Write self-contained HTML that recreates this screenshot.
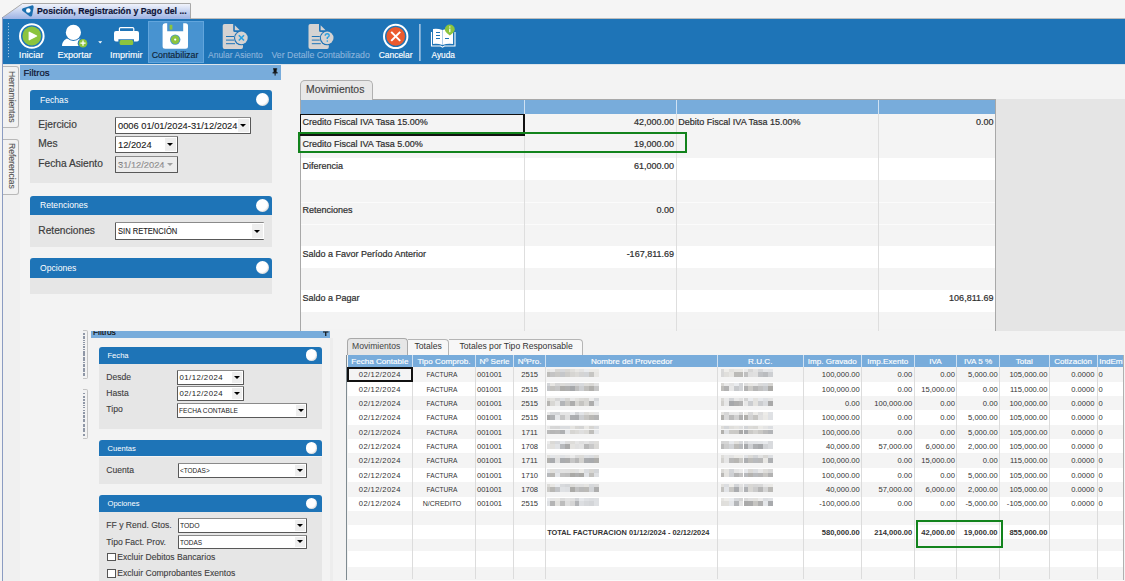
<!DOCTYPE html>
<html><head><meta charset="utf-8">
<style>
*{box-sizing:border-box;margin:0;padding:0}
html,body{width:1125px;height:581px;overflow:hidden;background:#f3f3f3;font-family:"Liberation Sans",sans-serif;color:#333}
.a{position:absolute}
.t{position:absolute;white-space:nowrap;line-height:1}
.tb{color:#fff;font-size:9.2px;-webkit-text-stroke:0.15px #fff}
.tbd{color:#8db4dc;font-size:9.2px;-webkit-text-stroke:0.1px #8db4dc}
.gh{position:absolute;background:#1e74b7;border-radius:3px 3px 0 0}
.gh span{position:absolute;left:10px;color:#fff;font-size:8.6px;line-height:1}
.gh i{position:absolute;width:13px;height:13px;border-radius:50%;background:#fff;box-shadow:inset -1px -1px 1px rgba(0,0,0,0.12)}
.gb{position:absolute;background:#e6e6e6}
.lbl{position:absolute;font-size:10.2px;color:#3d3d3d;white-space:nowrap;line-height:1;-webkit-text-stroke:0.2px #3d3d3d}
.cb{position:absolute;background:#fff;border:1px solid #585858;border-top-color:#8a8a8a;border-radius:1px}
.cb span{position:absolute;left:2px;font-size:9.3px;color:#222;white-space:nowrap;line-height:1;-webkit-text-stroke:0.12px #222}
.cb b{position:absolute;right:1px;top:1px;bottom:1px;width:11px;background:#eeeeee}
.cb b:after{content:"";position:absolute;left:50%;top:50%;margin-left:-3px;margin-top:-1.5px;border-left:3px solid transparent;border-right:3px solid transparent;border-top:3.2px solid #000}
.g{font-size:9px;color:#2e2e2e;-webkit-text-stroke:0.2px #2e2e2e}
.cb b.dis:after{border-top-color:#a0a0a0}
</style></head><body>

<!-- top tab strip -->
<div class="a" style="left:0;top:0;width:1125px;height:19px;background:#f5f5f5"></div>
<div class="a" style="left:191px;top:18px;width:934px;height:1px;background:#bdbdbd"></div>
<svg class="a" style="left:0;top:0" width="200" height="20">
<defs><linearGradient id="tg" x1="0" y1="0" x2="0" y2="1"><stop offset="0" stop-color="#f3f5fc"/><stop offset="1" stop-color="#97aee2"/></linearGradient></defs>
<path d="M2.5,20 L2.5,17.5 L22.5,3.5 L190.5,3.5 L190.5,20 Z" fill="url(#tg)" stroke="#a9a9a9" stroke-width="1"/>
<path d="M23.6,9.8 L32.1,6.9 L30.6,15 Z" fill="#1a6fb0" stroke="#1a6fb0" stroke-width="3.2" stroke-linejoin="round"/>
<circle cx="28.3" cy="10.5" r="2.3" fill="#fff"/>
</svg>
<div class="t" style="left:37px;top:5.6px;font-size:9.8px;font-weight:bold;color:#0c1236;-webkit-text-stroke:0.2px #0c1236;transform-origin:0 0;transform:scaleX(0.89)">Posición, Registración y Pago del ...</div>

<!-- toolbar -->
<div class="a" style="left:2px;top:19px;width:1123px;height:45px;background:#1e74b7"></div>
<div class="a" style="left:2px;top:17px;width:1px;height:564px;background:#8b9cc2"></div>

<!-- toolbar icons -->
<div class="a" style="left:148px;top:21px;width:56px;height:42px;background:#4893d0;border:1px solid #62a5dc"></div>
<svg class="a" style="left:0;top:19px" width="470" height="45" viewBox="0 19 470 45">
 <g fill="#9dc0e2"><rect x="8" y="23" width="1" height="1.2"/><rect x="8" y="26" width="1" height="1.2"/><rect x="8" y="29" width="1" height="1.2"/><rect x="8" y="32" width="1" height="1.2"/><rect x="8" y="35" width="1" height="1.2"/><rect x="8" y="38" width="1" height="1.2"/><rect x="8" y="41" width="1" height="1.2"/><rect x="8" y="44" width="1" height="1.2"/><rect x="8" y="47" width="1" height="1.2"/><rect x="8" y="50" width="1" height="1.2"/><rect x="8" y="53" width="1" height="1.2"/><rect x="8" y="56" width="1" height="1.2"/></g>
 <!-- play -->
 <circle cx="31.8" cy="36" r="11.8" fill="none" stroke="#fff" stroke-width="2"/>
 <circle cx="31.8" cy="36" r="9.4" fill="#8cc43e"/>
 <path d="M29.2,32.2 L36.6,36 L29.2,39.8 Z" fill="#fff" stroke="#fff" stroke-width="1.2" stroke-linejoin="round"/>
 <!-- person -->
 <path d="M62,46 C62,41 66,38.2 68.5,38.2 Q73.4,41.2 78.3,38.2 C81,38.2 84.5,41 84.5,46 Z" fill="#fff"/>
 <circle cx="73.4" cy="32.4" r="8.5" fill="#1e74b7"/>
 <circle cx="73.4" cy="32.4" r="7.6" fill="#fff"/>
 <circle cx="83" cy="43.2" r="5.3" fill="#1e74b7"/>
 <circle cx="83" cy="43.2" r="4.3" fill="#8cc43e"/>
 <path d="M83,40.6 V45.8 M80.4,43.2 H85.6" stroke="#fff" stroke-width="1.3"/>
 <path d="M98.2,41.2 L102.2,41.2 L100.2,43.6 Z" fill="#fff"/>
 <!-- printer -->
 <rect x="119.4" y="27.6" width="14.4" height="4" rx="1.2" fill="none" stroke="#fff" stroke-width="1.2"/>
 <path d="M116,31 H137 Q139,31 139,33 V39.6 Q139,41.6 137,41.6 H134 V39.2 H118.4 V41.6 H116 Q114,41.6 114,39.6 V33 Q114,31 116,31 Z" fill="#fff"/>
 <rect x="119.6" y="40" width="13.6" height="5" rx="1.5" fill="#8cc43e"/>
 <!-- floppy -->
 <path d="M165,23.2 H167.2 V31.2 H183.2 V23.2 H185.5 Q188,23.2 188,25.7 V46.3 Q188,48.8 185.5,48.8 H165.1 Q162.6,48.8 162.6,46.3 V25.7 Q162.6,23.2 165,23.2 Z" fill="#fff"/>
 <rect x="169.6" y="24.8" width="2.8" height="4.8" fill="#8cc43e"/>
 <circle cx="175.2" cy="39.6" r="5.2" fill="#4893d0"/>
 <circle cx="175.2" cy="39.6" r="4.3" fill="#8cc43e"/>
 <circle cx="175.2" cy="39.6" r="1.1" fill="#fff"/>
 <!-- anular doc -->
 <g>
 <path d="M224.5,23.9 H233.2 V30.5 Q233.2,32 234.8,32 H243 V47 Q243,48.9 241.2,48.9 H224.5 Q222.7,48.9 222.7,47 V25.7 Q222.7,23.9 224.5,23.9 Z" fill="#d5d3d2"/>
 <path d="M234.8,25.2 L239.8,30.2 H234.8 Z" fill="#d5d3d2"/>
 <path d="M226,36.5 H234 M226,40.1 H234 M226,43.7 H235" stroke="#1e74b7" stroke-width="1"/>
 <circle cx="241.4" cy="37.9" r="7.4" fill="#1e74b7"/>
 <circle cx="241.4" cy="37.9" r="6.3" fill="#d5d3d2"/>
 <path d="M238.8,35.3 L244,40.5 M244,35.3 L238.8,40.5" stroke="#2aa0e0" stroke-width="1.6"/>
 </g>
 <!-- ver detalle doc -->
 <g transform="translate(85.8,0)">
 <path d="M224.5,23.9 H233.2 V30.5 Q233.2,32 234.8,32 H243 V47 Q243,48.9 241.2,48.9 H224.5 Q222.7,48.9 222.7,47 V25.7 Q222.7,23.9 224.5,23.9 Z" fill="#d5d3d2"/>
 <path d="M234.8,25.2 L239.8,30.2 H234.8 Z" fill="#d5d3d2"/>
 <path d="M226,36.5 H234 M226,40.1 H234 M226,43.7 H235" stroke="#1e74b7" stroke-width="1"/>
 <circle cx="241.4" cy="37.9" r="7.4" fill="#1e74b7"/>
 <circle cx="241.4" cy="37.9" r="6.3" fill="#d5d3d2"/>
 <path d="M239.4,35.8 Q239.4,33.8 241.4,33.8 Q243.4,33.8 243.4,35.6 Q243.4,36.8 241.5,37.6 V39" fill="none" stroke="#2aa0e0" stroke-width="1.4"/>
 <circle cx="241.5" cy="41.1" r="0.8" fill="#2aa0e0"/>
 </g>
 <!-- cancel -->
 <circle cx="395.7" cy="36.4" r="11.7" fill="none" stroke="#fff" stroke-width="2"/>
 <circle cx="395.7" cy="36.4" r="9.3" fill="#ec5a2e"/>
 <path d="M391.2,31.9 L400.2,40.9 M400.2,31.9 L391.2,40.9" stroke="#fff" stroke-width="2"/>
 <rect x="419.3" y="24" width="1.2" height="37" fill="#cfe0f1"/>
 <!-- book -->
 <path d="M433,29 Q437,28 442.5,30 Q448,28 453,29 V44 Q448,43 442.5,45 Q437,43 433,44 Z" fill="#fff"/>
 <path d="M431.5,32 V46 H440.5 L442.5,47.2 L444.5,46 H455 V32" fill="none" stroke="#fff" stroke-width="1.1"/>
 <path d="M436,32.5 H440 M436,35.5 H440 M436,38.5 H440 M445,38.5 H449" stroke="#1e74b7" stroke-width="1"/>
 <path d="M442.5,30 V45" stroke="#9cc2e4" stroke-width="0.8"/>
 <path d="M444.8,29.6 A5,5 0 1 1 454.8,29.6 Q454.8,32.2 449.8,35.4 Q444.8,32.2 444.8,29.6 Z" fill="#8cc43e"/>
 <rect x="449.2" y="28.6" width="1.2" height="3.6" fill="#fff"/>
 <rect x="449.2" y="26.4" width="1.2" height="1.2" fill="#fff"/>
</svg>
<div class="t tb" style="left:18.8px;top:51px;font-size:9.3px">Iniciar</div>
<div class="t tb" style="left:57.4px;top:51px;font-size:9.1px">Exportar</div>
<div class="t tb" style="left:110px;top:51px;font-size:9px">Imprimir</div>
<div class="t tb" style="left:151.7px;top:51px;font-size:8.85px;color:#0f2438;-webkit-text-stroke:0.15px #0f2438">Contabilizar</div>
<div class="t tbd" style="left:208px;top:51px;font-size:8.5px">Anular Asiento</div>
<div class="t tbd" style="left:271.5px;top:51px;font-size:8.75px">Ver Detalle Contabilizado</div>
<div class="t tb" style="left:378.7px;top:51px;font-size:8.45px">Cancelar</div>
<div class="t tb" style="left:431.5px;top:51px;font-size:8.3px">Ayuda</div>

<!-- left strip & filtros panel -->
<div class="a" style="left:3px;top:64px;width:1122px;height:1px;background:#dde4ea"></div>
<div class="a" style="left:3px;top:65px;width:17px;height:516px;background:#f0f0f0"></div>
<div class="a" style="left:3px;top:66px;width:16px;height:62px;background:#f2f2f2;border:1px solid #b8b8b8;border-left:none;border-radius:0 3px 3px 0"></div>
<div class="t" style="left:4px;top:70.8px;font-size:8.6px;color:#565656;-webkit-text-stroke:0.1px #565656;transform-origin:0 0;transform:translate(12px,0) rotate(90deg)">Herramientas</div>
<div class="a" style="left:3px;top:139px;width:16px;height:56px;background:#f2f2f2;border:1px solid #b8b8b8;border-left:none;border-radius:0 3px 3px 0"></div>
<div class="t" style="left:4px;top:143px;font-size:8.6px;color:#565656;-webkit-text-stroke:0.1px #565656;transform-origin:0 0;transform:translate(12px,0) rotate(90deg)">Referencias</div>

<div class="a" style="left:20px;top:65px;width:261px;height:15px;background:#78acdb"></div>
<div class="t" style="left:23.5px;top:68px;font-size:9.6px;color:#0d1530;-webkit-text-stroke:0.2px #0d1530">Filtros</div>
<svg class="a" style="left:270px;top:66px" width="10" height="11"><rect x="3.6" y="2.6" width="3" height="4" fill="#111"/><rect x="3" y="2.4" width="4.2" height="1" fill="#111"/><rect x="2.6" y="6.2" width="5" height="1.2" fill="#111"/><rect x="4.6" y="7" width="1" height="2.6" fill="#111"/></svg>

<!-- Fechas group -->
<div class="gh" style="left:30px;top:90px;width:242px;height:19.5px"><span style="top:5.6px">Fechas</span><i style="left:225.5px;top:3px"></i></div>
<div class="gb" style="left:30px;top:109.5px;width:242px;height:73.5px"></div>
<div class="lbl" style="left:38.3px;top:120.3px">Ejercicio</div>
<div class="lbl" style="left:38.3px;top:139.3px">Mes</div>
<div class="lbl" style="left:38.3px;top:158.9px">Fecha Asiento</div>
<div class="cb" style="left:115px;top:117px;width:135.5px;height:16.5px"><span style="top:4px">0006 01/01/2024-31/12/2024</span><b></b></div>
<div class="cb" style="left:115px;top:135.7px;width:62.5px;height:17px"><span style="top:4.2px">12/2024</span><b></b></div>
<div class="cb" style="left:115px;top:155.5px;width:62.5px;height:17px;background:#ececec"><span style="top:4.2px;color:#a8a8a8">31/12/2024</span><b class="dis" style="background:#ececec"></b></div>

<!-- Retenciones group -->
<div class="gh" style="left:30px;top:195.5px;width:242px;height:19.5px"><span style="top:5.6px">Retenciones</span><i style="left:225.5px;top:3px"></i></div>
<div class="gb" style="left:30px;top:215px;width:242px;height:31.6px"></div>
<div class="lbl" style="left:38.3px;top:225.7px">Retenciones</div>
<div class="cb" style="left:114.6px;top:222px;width:149.4px;height:18px;border-right:none"><span style="top:3.8px;font-size:9px;transform-origin:0 0;transform:scaleX(0.84)">SIN RETENCIÓN</span><b></b></div>

<!-- Opciones group -->
<div class="gh" style="left:30px;top:258.2px;width:242px;height:20px"><span style="top:6px">Opciones</span><i style="left:225.5px;top:3.3px"></i></div>
<div class="gb" style="left:30px;top:278.2px;width:242px;height:15.4px"></div>

<!-- main content -->
<div class="a" style="left:300px;top:79.5px;width:73px;height:20.5px;background:#e8e8e8;border:1px solid #b0b0b0;border-bottom:none;border-radius:5px 5px 0 0"></div>
<div class="t" style="left:306px;top:85px;font-size:10.4px;color:#444;-webkit-text-stroke:0.15px #444">Movimientos</div>
<div class="a" style="left:373px;top:98.5px;width:752px;height:1px;background:#a8a8a8"></div>
<div class="a" style="left:300px;top:99px;width:1px;height:232px;background:#a8a8a8"></div>
<div class="a" style="left:301px;top:99.5px;width:694px;height:14.5px;background:#78acdb"></div>
<div class="a" style="left:995px;top:99px;width:130px;height:232px;background:#e5e5e5;border-left:1px solid #a8a8a8"></div>
<div class="a" style="left:301px;top:114px;width:694px;height:22px;background:#f4f4f4"></div>
<div class="t g" style="left:302.5px;top:118.20px">Credito Fiscal IVA Tasa 15.00%</div>
<div class="t g" style="right:451px;top:118.20px">42,000.00</div>
<div class="t g" style="left:678.3px;top:118.20px">Debito Fiscal IVA Tasa 15.00%</div>
<div class="t g" style="right:131.5px;top:118.20px">0.00</div>
<div class="a" style="left:301px;top:136px;width:694px;height:22px;background:#f4f4f4"></div>
<div class="t g" style="left:302.5px;top:140.20px">Credito Fiscal IVA Tasa 5.00%</div>
<div class="t g" style="right:451px;top:140.20px">19,000.00</div>
<div class="a" style="left:301px;top:158px;width:694px;height:22px;background:#ffffff"></div>
<div class="t g" style="left:302.5px;top:162.20px">Diferencia</div>
<div class="t g" style="right:451px;top:162.20px">61,000.00</div>
<div class="a" style="left:301px;top:180px;width:694px;height:22px;background:#f4f4f4"></div>
<div class="a" style="left:301px;top:202px;width:694px;height:22px;background:#f4f4f4;border-top:1px solid #fbfbfb"></div>
<div class="t g" style="left:302.5px;top:206.20px">Retenciones</div>
<div class="t g" style="right:451px;top:206.20px">0.00</div>
<div class="a" style="left:301px;top:224px;width:694px;height:22px;background:#f4f4f4;border-top:1px solid #fbfbfb"></div>
<div class="a" style="left:301px;top:246px;width:694px;height:22px;background:#ffffff"></div>
<div class="t g" style="left:302.5px;top:250.20px">Saldo a Favor Período Anterior</div>
<div class="t g" style="right:451px;top:250.20px">-167,811.69</div>
<div class="a" style="left:301px;top:268px;width:694px;height:22px;background:#f4f4f4"></div>
<div class="a" style="left:301px;top:290px;width:694px;height:22px;background:#ffffff"></div>
<div class="t g" style="left:302.5px;top:294.20px">Saldo a Pagar</div>
<div class="t g" style="right:131.5px;top:294.20px">106,811.69</div>
<div class="a" style="left:301px;top:312px;width:694px;height:17px;background:#f4f4f4"></div>
<div class="a" style="left:524px;top:100px;width:1px;height:231px;background:#dedede"></div>
<div class="a" style="left:675.5px;top:100px;width:1px;height:231px;background:#dedede"></div>
<div class="a" style="left:877.5px;top:100px;width:1px;height:231px;background:#dedede"></div>
<div class="a" style="left:524px;top:100px;width:1px;height:14px;background:#d0e2f3"></div>
<div class="a" style="left:675.5px;top:100px;width:1px;height:14px;background:#d0e2f3"></div>
<div class="a" style="left:877.5px;top:100px;width:1px;height:14px;background:#d0e2f3"></div>
<div class="a" style="left:300.4px;top:114px;width:225px;height:22px;border:2px solid #111;border-top-width:1.5px;border-left-width:1.5px"></div>
<div class="a" style="left:297.8px;top:131.5px;width:389.5px;height:21.5px;border:2.2px solid #12831c"></div>
<!-- overlay -->
<div class="a" style="left:80px;top:331px;width:1045px;height:250px;background:#f3f3f3"></div>
<div class="a" style="left:82.5px;top:330px;width:5.5px;height:49px;background:#f2f2f2;border:1px solid #c4c4c4;border-left:none;border-radius:0 2px 2px 0"></div>
<div class="a" style="left:82.5px;top:389.3px;width:5.5px;height:50px;background:#f2f2f2;border:1px solid #c4c4c4;border-left:none;border-radius:0 2px 2px 0"></div>
<div class="a" style="left:83.4px;top:333px;width:1.3px;height:2px;background:#8f97a6"></div>
<div class="a" style="left:83.4px;top:335.5px;width:1.3px;height:3px;background:#8f97a6"></div>
<div class="a" style="left:83.4px;top:340.0px;width:1.3px;height:1px;background:#8f97a6"></div>
<div class="a" style="left:83.4px;top:341.5px;width:1.3px;height:1px;background:#8f97a6"></div>
<div class="a" style="left:83.4px;top:343.5px;width:1.3px;height:1px;background:#8f97a6"></div>
<div class="a" style="left:83.4px;top:346.0px;width:1.3px;height:2px;background:#8f97a6"></div>
<div class="a" style="left:83.4px;top:348.5px;width:1.3px;height:1px;background:#8f97a6"></div>
<div class="a" style="left:83.4px;top:350.5px;width:1.3px;height:3px;background:#8f97a6"></div>
<div class="a" style="left:83.4px;top:354.0px;width:1.3px;height:2px;background:#8f97a6"></div>
<div class="a" style="left:83.4px;top:356.5px;width:1.3px;height:3px;background:#8f97a6"></div>
<div class="a" style="left:83.4px;top:360.0px;width:1.3px;height:1px;background:#8f97a6"></div>
<div class="a" style="left:83.4px;top:361.5px;width:1.3px;height:1px;background:#8f97a6"></div>
<div class="a" style="left:83.4px;top:364.0px;width:1.3px;height:3px;background:#8f97a6"></div>
<div class="a" style="left:83.4px;top:367.5px;width:1.3px;height:2px;background:#8f97a6"></div>
<div class="a" style="left:83.4px;top:370.0px;width:1.3px;height:2px;background:#8f97a6"></div>
<div class="a" style="left:83.4px;top:373.0px;width:1.3px;height:3px;background:#8f97a6"></div>
<div class="a" style="left:83.4px;top:393px;width:1.3px;height:1px;background:#8f97a6"></div>
<div class="a" style="left:83.4px;top:395.5px;width:1.3px;height:2px;background:#8f97a6"></div>
<div class="a" style="left:83.4px;top:399.0px;width:1.3px;height:2px;background:#8f97a6"></div>
<div class="a" style="left:83.4px;top:401.5px;width:1.3px;height:2px;background:#8f97a6"></div>
<div class="a" style="left:83.4px;top:404.5px;width:1.3px;height:1px;background:#8f97a6"></div>
<div class="a" style="left:83.4px;top:407.0px;width:1.3px;height:1px;background:#8f97a6"></div>
<div class="a" style="left:83.4px;top:409.5px;width:1.3px;height:1px;background:#8f97a6"></div>
<div class="a" style="left:83.4px;top:412.0px;width:1.3px;height:2px;background:#8f97a6"></div>
<div class="a" style="left:83.4px;top:415.0px;width:1.3px;height:3px;background:#8f97a6"></div>
<div class="a" style="left:83.4px;top:419.0px;width:1.3px;height:3px;background:#8f97a6"></div>
<div class="a" style="left:83.4px;top:423.5px;width:1.3px;height:3px;background:#8f97a6"></div>
<div class="a" style="left:83.4px;top:427.5px;width:1.3px;height:2px;background:#8f97a6"></div>
<div class="a" style="left:83.4px;top:430.0px;width:1.3px;height:2px;background:#8f97a6"></div>
<div class="a" style="left:83.4px;top:433.5px;width:1.3px;height:2px;background:#8f97a6"></div>
<div class="a" style="left:90.5px;top:331px;width:239.5px;height:7.3px;background:#78acdb;overflow:hidden"><div class="t" style="left:2.5px;top:-3.4px;font-size:8.4px;color:#111;-webkit-text-stroke:0.2px #111">Filtros</div></div>
<svg class="a" style="left:322px;top:331px" width="8" height="6"><path d="M1,1 H6.5 M3.75,1 V5" stroke="#111" stroke-width="1.2"/></svg>
<div class="a" style="left:330px;top:338px;width:3px;height:243px;background:#ededed"></div>
<div class="gh" style="left:98.7px;top:346.5px;width:223.3px;height:17px"><span style="top:5.30px;left:8.8px;font-size:7.6px">Fecha</span><i style="left:207px;top:2.70px;width:11.5px;height:11.5px"></i></div>
<div class="gb" style="left:98.7px;top:363.5px;width:223.3px;height:65.5px"></div>
<div class="lbl" style="left:106.3px;top:372.72px;font-size:8.6px;-webkit-text-stroke:0.1px #3d3d3d">Desde</div>
<div class="lbl" style="left:106.3px;top:389.02px;font-size:8.6px;-webkit-text-stroke:0.1px #3d3d3d">Hasta</div>
<div class="lbl" style="left:106.3px;top:405.42px;font-size:8.6px;-webkit-text-stroke:0.1px #3d3d3d">Tipo</div>
<div class="cb" style="left:177.3px;top:370px;width:66.50px;height:14.70px"><span style="top:3.07px;left:1.2px;font-size:7.8px;letter-spacing:0.45px;transform-origin:0 0;transform:scaleX(1);-webkit-text-stroke:0">01/12/2024</span><b style="width:9.5px;top:1px;bottom:1px"></b></div>
<div class="cb" style="left:177.3px;top:386.4px;width:66.50px;height:14.60px"><span style="top:3.02px;left:1.2px;font-size:7.8px;letter-spacing:0.45px;transform-origin:0 0;transform:scaleX(1);-webkit-text-stroke:0">02/12/2024</span><b style="width:9.5px;top:1px;bottom:1px"></b></div>
<div class="cb" style="left:177.3px;top:402.7px;width:130.10px;height:14.90px"><span style="top:3.26px;left:1.2px;font-size:7.6px;letter-spacing:0px;transform-origin:0 0;transform:scaleX(0.87);-webkit-text-stroke:0">FECHA CONTABLE</span><b style="width:9.5px;top:1px;bottom:1px"></b></div>
<div class="gh" style="left:98.7px;top:439.6px;width:223.3px;height:16.9px"><span style="top:5.25px;left:8.8px;font-size:7.6px">Cuentas</span><i style="left:207px;top:2.65px;width:11.5px;height:11.5px"></i></div>
<div class="gb" style="left:98.7px;top:456.5px;width:223.3px;height:27.5px"></div>
<div class="lbl" style="left:106.3px;top:465.72px;font-size:8.6px;-webkit-text-stroke:0.1px #3d3d3d">Cuenta</div>
<div class="cb" style="left:177.6px;top:462.5px;width:129.40px;height:15.00px"><span style="top:3.31px;left:1.2px;font-size:7.6px;letter-spacing:0px;transform-origin:0 0;transform:scaleX(0.85);-webkit-text-stroke:0">&lt;TODAS&gt;</span><b style="width:9.5px;top:1px;bottom:1px"></b></div>
<div class="gh" style="left:98.7px;top:495px;width:223.3px;height:16.8px"><span style="top:5.20px;left:8.8px;font-size:7.6px">Opciones</span><i style="left:207px;top:2.60px;width:11.5px;height:11.5px"></i></div>
<div class="gb" style="left:98.7px;top:511.8px;width:223.3px;height:70px"></div>
<div class="lbl" style="left:106.3px;top:521.12px;font-size:8.6px;-webkit-text-stroke:0.1px #3d3d3d">FF y Rend. Gtos.</div>
<div class="lbl" style="left:106.3px;top:537.72px;font-size:8.6px;-webkit-text-stroke:0.1px #3d3d3d">Tipo Fact. Prov.</div>
<div class="cb" style="left:177.6px;top:518.3px;width:129.40px;height:14.30px"><span style="top:2.96px;left:1.2px;font-size:7.6px;letter-spacing:0px;transform-origin:0 0;transform:scaleX(0.9);-webkit-text-stroke:0">TODO</span><b style="width:9.5px;top:1px;bottom:1px"></b></div>
<div class="cb" style="left:177.6px;top:534.7px;width:129.40px;height:14.30px"><span style="top:2.96px;left:1.2px;font-size:7.6px;letter-spacing:0px;transform-origin:0 0;transform:scaleX(0.85);-webkit-text-stroke:0">TODAS</span><b style="width:9.5px;top:1px;bottom:1px"></b></div>
<div class="a" style="left:106.9px;top:552.6px;width:9px;height:8.7px;background:#fff;border:1px solid #555"></div>
<div class="lbl" style="left:117.3px;top:552.72px;font-size:8.6px;-webkit-text-stroke:0.1px #3d3d3d">Excluir Debitos Bancarios</div>
<div class="a" style="left:106.9px;top:569px;width:9px;height:8.7px;background:#fff;border:1px solid #555"></div>
<div class="lbl" style="left:117.3px;top:569.12px;font-size:8.6px;-webkit-text-stroke:0.1px #3d3d3d">Excluir Comprobantes Exentos</div>
<div class="a" style="left:346.8px;top:338.2px;width:61.6px;height:17px;background:#e6e6e6;border:1px solid #a9a9a9;border-bottom:none;border-radius:4px 4px 0 0"></div>
<div class="a" style="left:408.4px;top:339px;width:41px;height:16.3px;background:#f7f7f7;border:1px solid #b5b5b5;border-bottom:none;border-left:none;border-radius:0 4px 0 0"></div>
<div class="a" style="left:449.4px;top:339px;width:133.4px;height:16.3px;background:#f7f7f7;border:1px solid #b5b5b5;border-bottom:none;border-left:none;border-radius:0 4px 0 0"></div>
<div class="t" style="left:352px;top:342.3px;font-size:8.6px;color:#444">Movimientos</div>
<div class="t" style="left:414.5px;top:342.3px;font-size:8.6px;color:#333">Totales</div>
<div class="t" style="left:459.5px;top:342.3px;font-size:8.6px;color:#333">Totales por Tipo Responsable</div>
<div class="a" style="left:582.8px;top:354.8px;width:540px;height:1px;background:#a9a9a9"></div>
<div class="a" style="left:346px;top:355.3px;width:1px;height:224.5px;background:#7f8b91"></div>
<div class="a" style="left:1122.5px;top:355.3px;width:1px;height:224.5px;background:#b0b0b0"></div>
<div class="a" style="left:347.5px;top:355.3px;width:775px;height:12px;background:#78acdb"></div>
<div class="a" style="left:347.5px;top:367.40px;width:775px;height:14.35px;background:#f4f4f4"></div>
<div class="a" style="left:347.5px;top:381.75px;width:775px;height:14.35px;background:#ffffff"></div>
<div class="a" style="left:347.5px;top:396.10px;width:775px;height:14.35px;background:#f4f4f4"></div>
<div class="a" style="left:347.5px;top:410.45px;width:775px;height:14.35px;background:#ffffff"></div>
<div class="a" style="left:347.5px;top:424.80px;width:775px;height:14.35px;background:#f4f4f4"></div>
<div class="a" style="left:347.5px;top:439.15px;width:775px;height:14.35px;background:#ffffff"></div>
<div class="a" style="left:347.5px;top:453.50px;width:775px;height:14.35px;background:#f4f4f4"></div>
<div class="a" style="left:347.5px;top:467.85px;width:775px;height:14.35px;background:#ffffff"></div>
<div class="a" style="left:347.5px;top:482.20px;width:775px;height:14.35px;background:#f4f4f4"></div>
<div class="a" style="left:347.5px;top:496.55px;width:775px;height:14.35px;background:#ffffff"></div>
<div class="a" style="left:347.5px;top:510.90px;width:775px;height:14.20px;background:#f4f4f4"></div>
<div class="a" style="left:347.5px;top:525.10px;width:775px;height:13.90px;background:#ffffff"></div>
<div class="a" style="left:347.5px;top:539.00px;width:775px;height:11.90px;background:#f4f4f4"></div>
<div class="a" style="left:347.5px;top:550.90px;width:775px;height:16.00px;background:#ffffff"></div>
<div class="a" style="left:347.5px;top:566.90px;width:775px;height:12.60px;background:#f4f4f4"></div>
<div class="a" style="left:346.5px;top:579.7px;width:777px;height:1.5px;background:#fafafa"></div>
<div class="a" style="left:412.00px;top:367.4px;width:1px;height:212px;background:#dcdcdc"></div>
<div class="a" style="left:412.00px;top:355.3px;width:1px;height:12px;background:#cfe1f2"></div>
<div class="a" style="left:475.00px;top:367.4px;width:1px;height:212px;background:#dcdcdc"></div>
<div class="a" style="left:475.00px;top:355.3px;width:1px;height:12px;background:#cfe1f2"></div>
<div class="a" style="left:513.00px;top:367.4px;width:1px;height:212px;background:#dcdcdc"></div>
<div class="a" style="left:513.00px;top:355.3px;width:1px;height:12px;background:#cfe1f2"></div>
<div class="a" style="left:545.30px;top:367.4px;width:1px;height:212px;background:#dcdcdc"></div>
<div class="a" style="left:545.30px;top:355.3px;width:1px;height:12px;background:#cfe1f2"></div>
<div class="a" style="left:717.00px;top:367.4px;width:1px;height:212px;background:#dcdcdc"></div>
<div class="a" style="left:717.00px;top:355.3px;width:1px;height:12px;background:#cfe1f2"></div>
<div class="a" style="left:802.50px;top:367.4px;width:1px;height:212px;background:#dcdcdc"></div>
<div class="a" style="left:802.50px;top:355.3px;width:1px;height:12px;background:#cfe1f2"></div>
<div class="a" style="left:861.00px;top:367.4px;width:1px;height:212px;background:#dcdcdc"></div>
<div class="a" style="left:861.00px;top:355.3px;width:1px;height:12px;background:#cfe1f2"></div>
<div class="a" style="left:913.50px;top:367.4px;width:1px;height:212px;background:#dcdcdc"></div>
<div class="a" style="left:913.50px;top:355.3px;width:1px;height:12px;background:#cfe1f2"></div>
<div class="a" style="left:956.30px;top:367.4px;width:1px;height:212px;background:#dcdcdc"></div>
<div class="a" style="left:956.30px;top:355.3px;width:1px;height:12px;background:#cfe1f2"></div>
<div class="a" style="left:998.90px;top:367.4px;width:1px;height:212px;background:#dcdcdc"></div>
<div class="a" style="left:998.90px;top:355.3px;width:1px;height:12px;background:#cfe1f2"></div>
<div class="a" style="left:1048.70px;top:367.4px;width:1px;height:212px;background:#dcdcdc"></div>
<div class="a" style="left:1048.70px;top:355.3px;width:1px;height:12px;background:#cfe1f2"></div>
<div class="a" style="left:1096.50px;top:367.4px;width:1px;height:212px;background:#dcdcdc"></div>
<div class="a" style="left:1096.50px;top:355.3px;width:1px;height:12px;background:#cfe1f2"></div>
<div class="t" style="left:347.20px;width:65.30px;text-align:center;top:358.2px;font-size:8.1px;color:#fff;-webkit-text-stroke:0.15px #fff">Fecha Contable</div>
<div class="t" style="left:412.50px;width:63.00px;text-align:center;top:358.2px;font-size:8.1px;color:#fff;-webkit-text-stroke:0.15px #fff">Tipo Comprob.</div>
<div class="t" style="left:475.50px;width:38.00px;text-align:center;top:358.2px;font-size:8.1px;color:#fff;-webkit-text-stroke:0.15px #fff">Nº Serie</div>
<div class="t" style="left:513.50px;width:32.30px;text-align:center;top:358.2px;font-size:8.1px;color:#fff;-webkit-text-stroke:0.15px #fff">NºPro.</div>
<div class="t" style="left:545.80px;width:171.70px;text-align:center;top:358.2px;font-size:8.1px;color:#fff;-webkit-text-stroke:0.15px #fff">Nombre del Proveedor</div>
<div class="t" style="left:717.50px;width:85.50px;text-align:center;top:358.2px;font-size:8.1px;color:#fff;-webkit-text-stroke:0.15px #fff">R.U.C.</div>
<div class="t" style="left:803.00px;width:58.50px;text-align:center;top:358.2px;font-size:8.1px;color:#fff;-webkit-text-stroke:0.15px #fff">Imp. Gravado</div>
<div class="t" style="left:861.50px;width:52.50px;text-align:center;top:358.2px;font-size:8.1px;color:#fff;-webkit-text-stroke:0.15px #fff">Imp.Exento</div>
<div class="t" style="left:914.00px;width:42.80px;text-align:center;top:358.2px;font-size:8.1px;color:#fff;-webkit-text-stroke:0.15px #fff">IVA</div>
<div class="t" style="left:956.80px;width:42.60px;text-align:center;top:358.2px;font-size:8.1px;color:#fff;-webkit-text-stroke:0.15px #fff">IVA 5 %</div>
<div class="t" style="left:999.40px;width:49.80px;text-align:center;top:358.2px;font-size:8.1px;color:#fff;-webkit-text-stroke:0.15px #fff">Total</div>
<div class="t" style="left:1049.20px;width:47.80px;text-align:center;top:358.2px;font-size:8.1px;color:#fff;-webkit-text-stroke:0.15px #fff">Cotización</div>
<div class="a" style="left:1098px;top:355.3px;width:24.50px;height:12px;overflow:hidden"><div class="t" style="left:1.2px;top:2.9px;font-size:8.1px;color:#fff;-webkit-text-stroke:0.15px #fff">IndEmi</div></div>
<div class="t" style="left:347.20px;width:65.30px;text-align:center;top:371.17px;font-size:7.6px;color:#333;letter-spacing:0.4px">02/12/2024</div>
<div class="t" style="left:407.50px;width:68.00px;text-align:center;top:371.17px;font-size:7.6px;color:#333;transform:scaleX(0.87)">FACTURA</div>
<div class="t" style="left:477.00px;top:371.17px;font-size:7.6px;color:#333;letter-spacing:-0.05px">001001</div>
<div class="t" style="left:513.50px;width:32.30px;text-align:center;top:371.17px;font-size:7.6px;color:#333;">2515</div>
<div class="t" style="right:265.30px;top:371.17px;font-size:7.6px;color:#333;">100,000.00</div>
<div class="t" style="right:212.80px;top:371.17px;font-size:7.6px;color:#333;">0.00</div>
<div class="t" style="right:170.00px;top:371.17px;font-size:7.6px;color:#333;">0.00</div>
<div class="t" style="right:127.40px;top:371.17px;font-size:7.6px;color:#333;">5,000.00</div>
<div class="t" style="right:77.60px;top:371.17px;font-size:7.6px;color:#333;">105,000.00</div>
<div class="t" style="right:30.50px;top:371.17px;font-size:7.6px;color:#333;">0.0000</div>
<div class="t" style="left:1098.50px;top:371.17px;font-size:7.6px;color:#333;">0</div>
<div class="a" style="left:547.20px;top:369.00px;width:3.10px;height:3.1px;background:rgb(232,231,228)"></div>
<div class="a" style="left:547.20px;top:372.10px;width:3.10px;height:4.9px;background:rgb(189,188,185)"></div>
<div class="a" style="left:550.30px;top:369.00px;width:4.85px;height:3.1px;background:rgb(235,235,235)"></div>
<div class="a" style="left:550.30px;top:372.10px;width:4.85px;height:4.9px;background:rgb(196,196,196)"></div>
<div class="a" style="left:555.15px;top:369.00px;width:4.85px;height:3.1px;background:rgb(217,216,213)"></div>
<div class="a" style="left:555.15px;top:372.10px;width:4.85px;height:4.9px;background:rgb(202,201,198)"></div>
<div class="a" style="left:560.00px;top:369.00px;width:4.85px;height:3.1px;background:rgb(214,216,219)"></div>
<div class="a" style="left:560.00px;top:372.10px;width:4.85px;height:4.9px;background:rgb(197,199,202)"></div>
<div class="a" style="left:564.85px;top:369.00px;width:4.85px;height:3.1px;background:rgb(216,215,212)"></div>
<div class="a" style="left:564.85px;top:372.10px;width:4.85px;height:4.9px;background:rgb(205,204,201)"></div>
<div class="a" style="left:569.70px;top:369.00px;width:4.85px;height:3.1px;background:rgb(224,223,220)"></div>
<div class="a" style="left:569.70px;top:372.10px;width:4.85px;height:4.9px;background:rgb(214,213,210)"></div>
<div class="a" style="left:574.55px;top:369.00px;width:4.85px;height:3.1px;background:rgb(232,231,228)"></div>
<div class="a" style="left:574.55px;top:372.10px;width:4.85px;height:4.9px;background:rgb(219,218,215)"></div>
<div class="a" style="left:579.40px;top:369.00px;width:4.85px;height:3.1px;background:rgb(227,227,227)"></div>
<div class="a" style="left:579.40px;top:372.10px;width:4.85px;height:4.9px;background:rgb(212,212,212)"></div>
<div class="a" style="left:584.25px;top:369.00px;width:4.85px;height:3.1px;background:rgb(233,235,238)"></div>
<div class="a" style="left:584.25px;top:372.10px;width:4.85px;height:4.9px;background:rgb(210,212,215)"></div>
<div class="a" style="left:589.10px;top:369.00px;width:4.85px;height:3.1px;background:rgb(235,234,231)"></div>
<div class="a" style="left:589.10px;top:372.10px;width:4.85px;height:4.9px;background:rgb(198,197,194)"></div>
<div class="a" style="left:593.95px;top:369.00px;width:4.85px;height:3.1px;background:rgb(235,234,231)"></div>
<div class="a" style="left:593.95px;top:372.10px;width:4.85px;height:4.9px;background:rgb(231,230,227)"></div>
<div class="a" style="left:721.00px;top:369.00px;width:3.10px;height:3.1px;background:rgb(217,217,217)"></div>
<div class="a" style="left:721.00px;top:372.10px;width:3.10px;height:4.9px;background:rgb(216,216,216)"></div>
<div class="a" style="left:724.10px;top:369.00px;width:4.85px;height:3.1px;background:rgb(238,237,234)"></div>
<div class="a" style="left:724.10px;top:372.10px;width:4.85px;height:4.9px;background:rgb(224,223,220)"></div>
<div class="a" style="left:728.95px;top:369.00px;width:4.85px;height:3.1px;background:rgb(226,225,222)"></div>
<div class="a" style="left:728.95px;top:372.10px;width:4.85px;height:4.9px;background:rgb(231,230,227)"></div>
<div class="a" style="left:733.80px;top:369.00px;width:4.85px;height:3.1px;background:rgb(231,230,227)"></div>
<div class="a" style="left:733.80px;top:372.10px;width:4.85px;height:4.9px;background:rgb(187,186,183)"></div>
<div class="a" style="left:738.65px;top:369.00px;width:4.85px;height:3.1px;background:rgb(231,230,227)"></div>
<div class="a" style="left:738.65px;top:372.10px;width:4.85px;height:4.9px;background:rgb(187,186,183)"></div>
<div class="a" style="left:743.50px;top:369.00px;width:4.85px;height:3.1px;background:rgb(233,233,233)"></div>
<div class="a" style="left:743.50px;top:372.10px;width:4.85px;height:4.9px;background:rgb(192,192,192)"></div>
<div class="a" style="left:748.35px;top:369.00px;width:4.85px;height:3.1px;background:rgb(214,214,214)"></div>
<div class="a" style="left:748.35px;top:372.10px;width:4.85px;height:4.9px;background:rgb(222,222,222)"></div>
<div class="a" style="left:753.20px;top:369.00px;width:4.85px;height:3.1px;background:rgb(227,227,227)"></div>
<div class="a" style="left:753.20px;top:372.10px;width:4.85px;height:4.9px;background:rgb(224,224,224)"></div>
<div class="a" style="left:758.05px;top:369.00px;width:4.85px;height:3.1px;background:rgb(214,216,219)"></div>
<div class="a" style="left:758.05px;top:372.10px;width:4.85px;height:4.9px;background:rgb(192,194,197)"></div>
<div class="a" style="left:762.90px;top:369.00px;width:4.85px;height:3.1px;background:rgb(228,230,233)"></div>
<div class="a" style="left:762.90px;top:372.10px;width:4.85px;height:4.9px;background:rgb(186,188,191)"></div>
<div class="a" style="left:767.75px;top:369.00px;width:4.85px;height:3.1px;background:rgb(226,228,231)"></div>
<div class="a" style="left:767.75px;top:372.10px;width:4.85px;height:4.9px;background:rgb(205,207,210)"></div>
<div class="t" style="left:347.20px;width:65.30px;text-align:center;top:385.52px;font-size:7.6px;color:#333;letter-spacing:0.4px">02/12/2024</div>
<div class="t" style="left:407.50px;width:68.00px;text-align:center;top:385.52px;font-size:7.6px;color:#333;transform:scaleX(0.87)">FACTURA</div>
<div class="t" style="left:477.00px;top:385.52px;font-size:7.6px;color:#333;letter-spacing:-0.05px">001001</div>
<div class="t" style="left:513.50px;width:32.30px;text-align:center;top:385.52px;font-size:7.6px;color:#333;">2515</div>
<div class="t" style="right:265.30px;top:385.52px;font-size:7.6px;color:#333;">100,000.00</div>
<div class="t" style="right:212.80px;top:385.52px;font-size:7.6px;color:#333;">0.00</div>
<div class="t" style="right:170.00px;top:385.52px;font-size:7.6px;color:#333;">15,000.00</div>
<div class="t" style="right:127.40px;top:385.52px;font-size:7.6px;color:#333;">0.00</div>
<div class="t" style="right:77.60px;top:385.52px;font-size:7.6px;color:#333;">115,000.00</div>
<div class="t" style="right:30.50px;top:385.52px;font-size:7.6px;color:#333;">0.0000</div>
<div class="t" style="left:1098.50px;top:385.52px;font-size:7.6px;color:#333;">0</div>
<div class="a" style="left:547.20px;top:383.35px;width:3.10px;height:3.1px;background:rgb(211,213,216)"></div>
<div class="a" style="left:547.20px;top:386.45px;width:3.10px;height:4.9px;background:rgb(195,197,200)"></div>
<div class="a" style="left:550.30px;top:383.35px;width:4.85px;height:3.1px;background:rgb(231,230,227)"></div>
<div class="a" style="left:550.30px;top:386.45px;width:4.85px;height:4.9px;background:rgb(195,194,191)"></div>
<div class="a" style="left:555.15px;top:383.35px;width:4.85px;height:3.1px;background:rgb(215,215,215)"></div>
<div class="a" style="left:555.15px;top:386.45px;width:4.85px;height:4.9px;background:rgb(198,198,198)"></div>
<div class="a" style="left:560.00px;top:383.35px;width:4.85px;height:3.1px;background:rgb(220,219,216)"></div>
<div class="a" style="left:560.00px;top:386.45px;width:4.85px;height:4.9px;background:rgb(174,173,170)"></div>
<div class="a" style="left:564.85px;top:383.35px;width:4.85px;height:3.1px;background:rgb(217,217,217)"></div>
<div class="a" style="left:564.85px;top:386.45px;width:4.85px;height:4.9px;background:rgb(175,175,175)"></div>
<div class="a" style="left:569.70px;top:383.35px;width:4.85px;height:3.1px;background:rgb(213,215,218)"></div>
<div class="a" style="left:569.70px;top:386.45px;width:4.85px;height:4.9px;background:rgb(166,168,171)"></div>
<div class="a" style="left:574.55px;top:383.35px;width:4.85px;height:3.1px;background:rgb(215,215,215)"></div>
<div class="a" style="left:574.55px;top:386.45px;width:4.85px;height:4.9px;background:rgb(191,191,191)"></div>
<div class="a" style="left:579.40px;top:383.35px;width:4.85px;height:3.1px;background:rgb(216,218,221)"></div>
<div class="a" style="left:579.40px;top:386.45px;width:4.85px;height:4.9px;background:rgb(205,207,210)"></div>
<div class="a" style="left:584.25px;top:383.35px;width:4.85px;height:3.1px;background:rgb(222,221,218)"></div>
<div class="a" style="left:584.25px;top:386.45px;width:4.85px;height:4.9px;background:rgb(192,191,188)"></div>
<div class="a" style="left:589.10px;top:383.35px;width:4.85px;height:3.1px;background:rgb(217,216,213)"></div>
<div class="a" style="left:589.10px;top:386.45px;width:4.85px;height:4.9px;background:rgb(177,176,173)"></div>
<div class="a" style="left:593.95px;top:383.35px;width:4.85px;height:3.1px;background:rgb(227,227,227)"></div>
<div class="a" style="left:593.95px;top:386.45px;width:4.85px;height:4.9px;background:rgb(198,198,198)"></div>
<div class="a" style="left:721.00px;top:383.35px;width:3.10px;height:3.1px;background:rgb(217,216,213)"></div>
<div class="a" style="left:721.00px;top:386.45px;width:3.10px;height:4.9px;background:rgb(191,190,187)"></div>
<div class="a" style="left:724.10px;top:383.35px;width:4.85px;height:3.1px;background:rgb(234,234,234)"></div>
<div class="a" style="left:724.10px;top:386.45px;width:4.85px;height:4.9px;background:rgb(178,178,178)"></div>
<div class="a" style="left:728.95px;top:383.35px;width:4.85px;height:3.1px;background:rgb(228,228,228)"></div>
<div class="a" style="left:728.95px;top:386.45px;width:4.85px;height:4.9px;background:rgb(232,232,232)"></div>
<div class="a" style="left:733.80px;top:383.35px;width:4.85px;height:3.1px;background:rgb(234,236,239)"></div>
<div class="a" style="left:733.80px;top:386.45px;width:4.85px;height:4.9px;background:rgb(199,201,204)"></div>
<div class="a" style="left:738.65px;top:383.35px;width:4.85px;height:3.1px;background:rgb(212,214,217)"></div>
<div class="a" style="left:738.65px;top:386.45px;width:4.85px;height:4.9px;background:rgb(210,212,215)"></div>
<div class="a" style="left:743.50px;top:383.35px;width:4.85px;height:3.1px;background:rgb(223,223,223)"></div>
<div class="a" style="left:743.50px;top:386.45px;width:4.85px;height:4.9px;background:rgb(178,178,178)"></div>
<div class="a" style="left:748.35px;top:383.35px;width:4.85px;height:3.1px;background:rgb(231,230,227)"></div>
<div class="a" style="left:748.35px;top:386.45px;width:4.85px;height:4.9px;background:rgb(204,203,200)"></div>
<div class="a" style="left:753.20px;top:383.35px;width:4.85px;height:3.1px;background:rgb(232,232,232)"></div>
<div class="a" style="left:753.20px;top:386.45px;width:4.85px;height:4.9px;background:rgb(182,182,182)"></div>
<div class="a" style="left:758.05px;top:383.35px;width:4.85px;height:3.1px;background:rgb(219,219,219)"></div>
<div class="a" style="left:758.05px;top:386.45px;width:4.85px;height:4.9px;background:rgb(193,193,193)"></div>
<div class="a" style="left:762.90px;top:383.35px;width:4.85px;height:3.1px;background:rgb(216,218,221)"></div>
<div class="a" style="left:762.90px;top:386.45px;width:4.85px;height:4.9px;background:rgb(199,201,204)"></div>
<div class="a" style="left:767.75px;top:383.35px;width:4.85px;height:3.1px;background:rgb(214,213,210)"></div>
<div class="a" style="left:767.75px;top:386.45px;width:4.85px;height:4.9px;background:rgb(171,170,167)"></div>
<div class="t" style="left:347.20px;width:65.30px;text-align:center;top:399.87px;font-size:7.6px;color:#333;letter-spacing:0.4px">02/12/2024</div>
<div class="t" style="left:407.50px;width:68.00px;text-align:center;top:399.87px;font-size:7.6px;color:#333;transform:scaleX(0.87)">FACTURA</div>
<div class="t" style="left:477.00px;top:399.87px;font-size:7.6px;color:#333;letter-spacing:-0.05px">001001</div>
<div class="t" style="left:513.50px;width:32.30px;text-align:center;top:399.87px;font-size:7.6px;color:#333;">2515</div>
<div class="t" style="right:265.30px;top:399.87px;font-size:7.6px;color:#333;">0.00</div>
<div class="t" style="right:212.80px;top:399.87px;font-size:7.6px;color:#333;">100,000.00</div>
<div class="t" style="right:170.00px;top:399.87px;font-size:7.6px;color:#333;">0.00</div>
<div class="t" style="right:127.40px;top:399.87px;font-size:7.6px;color:#333;">0.00</div>
<div class="t" style="right:77.60px;top:399.87px;font-size:7.6px;color:#333;">100,000.00</div>
<div class="t" style="right:30.50px;top:399.87px;font-size:7.6px;color:#333;">0.0000</div>
<div class="t" style="left:1098.50px;top:399.87px;font-size:7.6px;color:#333;">0</div>
<div class="a" style="left:547.20px;top:397.70px;width:3.10px;height:3.1px;background:rgb(222,221,218)"></div>
<div class="a" style="left:547.20px;top:400.80px;width:3.10px;height:4.9px;background:rgb(182,181,178)"></div>
<div class="a" style="left:550.30px;top:397.70px;width:4.85px;height:3.1px;background:rgb(228,227,224)"></div>
<div class="a" style="left:550.30px;top:400.80px;width:4.85px;height:4.9px;background:rgb(216,215,212)"></div>
<div class="a" style="left:555.15px;top:397.70px;width:4.85px;height:3.1px;background:rgb(214,214,214)"></div>
<div class="a" style="left:555.15px;top:400.80px;width:4.85px;height:4.9px;background:rgb(230,230,230)"></div>
<div class="a" style="left:560.00px;top:397.70px;width:4.85px;height:3.1px;background:rgb(220,222,225)"></div>
<div class="a" style="left:560.00px;top:400.80px;width:4.85px;height:4.9px;background:rgb(179,181,184)"></div>
<div class="a" style="left:564.85px;top:397.70px;width:4.85px;height:3.1px;background:rgb(214,213,210)"></div>
<div class="a" style="left:564.85px;top:400.80px;width:4.85px;height:4.9px;background:rgb(200,199,196)"></div>
<div class="a" style="left:569.70px;top:397.70px;width:4.85px;height:3.1px;background:rgb(232,232,232)"></div>
<div class="a" style="left:569.70px;top:400.80px;width:4.85px;height:4.9px;background:rgb(173,173,173)"></div>
<div class="a" style="left:574.55px;top:397.70px;width:4.85px;height:3.1px;background:rgb(226,225,222)"></div>
<div class="a" style="left:574.55px;top:400.80px;width:4.85px;height:4.9px;background:rgb(215,214,211)"></div>
<div class="a" style="left:579.40px;top:397.70px;width:4.85px;height:3.1px;background:rgb(219,218,215)"></div>
<div class="a" style="left:579.40px;top:400.80px;width:4.85px;height:4.9px;background:rgb(197,196,193)"></div>
<div class="a" style="left:584.25px;top:397.70px;width:4.85px;height:3.1px;background:rgb(216,215,212)"></div>
<div class="a" style="left:584.25px;top:400.80px;width:4.85px;height:4.9px;background:rgb(216,215,212)"></div>
<div class="a" style="left:589.10px;top:397.70px;width:4.85px;height:3.1px;background:rgb(235,235,235)"></div>
<div class="a" style="left:589.10px;top:400.80px;width:4.85px;height:4.9px;background:rgb(173,173,173)"></div>
<div class="a" style="left:593.95px;top:397.70px;width:4.85px;height:3.1px;background:rgb(214,216,219)"></div>
<div class="a" style="left:593.95px;top:400.80px;width:4.85px;height:4.9px;background:rgb(227,229,232)"></div>
<div class="a" style="left:721.00px;top:397.70px;width:3.10px;height:3.1px;background:rgb(218,217,214)"></div>
<div class="a" style="left:721.00px;top:400.80px;width:3.10px;height:4.9px;background:rgb(209,208,205)"></div>
<div class="a" style="left:724.10px;top:397.70px;width:4.85px;height:3.1px;background:rgb(233,233,233)"></div>
<div class="a" style="left:724.10px;top:400.80px;width:4.85px;height:4.9px;background:rgb(232,232,232)"></div>
<div class="a" style="left:728.95px;top:397.70px;width:4.85px;height:3.1px;background:rgb(210,212,215)"></div>
<div class="a" style="left:728.95px;top:400.80px;width:4.85px;height:4.9px;background:rgb(166,168,171)"></div>
<div class="a" style="left:733.80px;top:397.70px;width:4.85px;height:3.1px;background:rgb(232,232,232)"></div>
<div class="a" style="left:733.80px;top:400.80px;width:4.85px;height:4.9px;background:rgb(174,174,174)"></div>
<div class="a" style="left:738.65px;top:397.70px;width:4.85px;height:3.1px;background:rgb(225,225,225)"></div>
<div class="a" style="left:738.65px;top:400.80px;width:4.85px;height:4.9px;background:rgb(180,180,180)"></div>
<div class="a" style="left:743.50px;top:397.70px;width:4.85px;height:3.1px;background:rgb(212,212,212)"></div>
<div class="a" style="left:743.50px;top:400.80px;width:4.85px;height:4.9px;background:rgb(231,231,231)"></div>
<div class="a" style="left:748.35px;top:397.70px;width:4.85px;height:3.1px;background:rgb(234,236,239)"></div>
<div class="a" style="left:748.35px;top:400.80px;width:4.85px;height:4.9px;background:rgb(203,205,208)"></div>
<div class="a" style="left:753.20px;top:397.70px;width:4.85px;height:3.1px;background:rgb(227,226,223)"></div>
<div class="a" style="left:753.20px;top:400.80px;width:4.85px;height:4.9px;background:rgb(228,227,224)"></div>
<div class="a" style="left:758.05px;top:397.70px;width:4.85px;height:3.1px;background:rgb(231,233,236)"></div>
<div class="a" style="left:758.05px;top:400.80px;width:4.85px;height:4.9px;background:rgb(203,205,208)"></div>
<div class="a" style="left:762.90px;top:397.70px;width:4.85px;height:3.1px;background:rgb(223,225,228)"></div>
<div class="a" style="left:762.90px;top:400.80px;width:4.85px;height:4.9px;background:rgb(217,219,222)"></div>
<div class="a" style="left:767.75px;top:397.70px;width:4.85px;height:3.1px;background:rgb(228,228,228)"></div>
<div class="a" style="left:767.75px;top:400.80px;width:4.85px;height:4.9px;background:rgb(169,169,169)"></div>
<div class="t" style="left:347.20px;width:65.30px;text-align:center;top:414.22px;font-size:7.6px;color:#333;letter-spacing:0.4px">02/12/2024</div>
<div class="t" style="left:407.50px;width:68.00px;text-align:center;top:414.22px;font-size:7.6px;color:#333;transform:scaleX(0.87)">FACTURA</div>
<div class="t" style="left:477.00px;top:414.22px;font-size:7.6px;color:#333;letter-spacing:-0.05px">001001</div>
<div class="t" style="left:513.50px;width:32.30px;text-align:center;top:414.22px;font-size:7.6px;color:#333;">2515</div>
<div class="t" style="right:265.30px;top:414.22px;font-size:7.6px;color:#333;">100,000.00</div>
<div class="t" style="right:212.80px;top:414.22px;font-size:7.6px;color:#333;">0.00</div>
<div class="t" style="right:170.00px;top:414.22px;font-size:7.6px;color:#333;">0.00</div>
<div class="t" style="right:127.40px;top:414.22px;font-size:7.6px;color:#333;">5,000.00</div>
<div class="t" style="right:77.60px;top:414.22px;font-size:7.6px;color:#333;">105,000.00</div>
<div class="t" style="right:30.50px;top:414.22px;font-size:7.6px;color:#333;">0.0000</div>
<div class="t" style="left:1098.50px;top:414.22px;font-size:7.6px;color:#333;">0</div>
<div class="a" style="left:547.20px;top:412.05px;width:3.10px;height:3.1px;background:rgb(231,231,231)"></div>
<div class="a" style="left:547.20px;top:415.15px;width:3.10px;height:4.9px;background:rgb(168,168,168)"></div>
<div class="a" style="left:550.30px;top:412.05px;width:4.85px;height:3.1px;background:rgb(215,217,220)"></div>
<div class="a" style="left:550.30px;top:415.15px;width:4.85px;height:4.9px;background:rgb(175,177,180)"></div>
<div class="a" style="left:555.15px;top:412.05px;width:4.85px;height:3.1px;background:rgb(213,215,218)"></div>
<div class="a" style="left:555.15px;top:415.15px;width:4.85px;height:4.9px;background:rgb(229,231,234)"></div>
<div class="a" style="left:560.00px;top:412.05px;width:4.85px;height:3.1px;background:rgb(229,229,229)"></div>
<div class="a" style="left:560.00px;top:415.15px;width:4.85px;height:4.9px;background:rgb(198,198,198)"></div>
<div class="a" style="left:564.85px;top:412.05px;width:4.85px;height:3.1px;background:rgb(229,229,229)"></div>
<div class="a" style="left:564.85px;top:415.15px;width:4.85px;height:4.9px;background:rgb(223,223,223)"></div>
<div class="a" style="left:569.70px;top:412.05px;width:4.85px;height:3.1px;background:rgb(234,236,239)"></div>
<div class="a" style="left:569.70px;top:415.15px;width:4.85px;height:4.9px;background:rgb(172,174,177)"></div>
<div class="a" style="left:574.55px;top:412.05px;width:4.85px;height:3.1px;background:rgb(210,212,215)"></div>
<div class="a" style="left:574.55px;top:415.15px;width:4.85px;height:4.9px;background:rgb(170,172,175)"></div>
<div class="a" style="left:579.40px;top:412.05px;width:4.85px;height:3.1px;background:rgb(226,228,231)"></div>
<div class="a" style="left:579.40px;top:415.15px;width:4.85px;height:4.9px;background:rgb(204,206,209)"></div>
<div class="a" style="left:584.25px;top:412.05px;width:4.85px;height:3.1px;background:rgb(222,221,218)"></div>
<div class="a" style="left:584.25px;top:415.15px;width:4.85px;height:4.9px;background:rgb(198,197,194)"></div>
<div class="a" style="left:589.10px;top:412.05px;width:4.85px;height:3.1px;background:rgb(230,229,226)"></div>
<div class="a" style="left:589.10px;top:415.15px;width:4.85px;height:4.9px;background:rgb(185,184,181)"></div>
<div class="a" style="left:593.95px;top:412.05px;width:4.85px;height:3.1px;background:rgb(229,229,229)"></div>
<div class="a" style="left:593.95px;top:415.15px;width:4.85px;height:4.9px;background:rgb(180,180,180)"></div>
<div class="a" style="left:721.00px;top:412.05px;width:3.10px;height:3.1px;background:rgb(227,226,223)"></div>
<div class="a" style="left:721.00px;top:415.15px;width:3.10px;height:4.9px;background:rgb(177,176,173)"></div>
<div class="a" style="left:724.10px;top:412.05px;width:4.85px;height:3.1px;background:rgb(214,214,214)"></div>
<div class="a" style="left:724.10px;top:415.15px;width:4.85px;height:4.9px;background:rgb(217,217,217)"></div>
<div class="a" style="left:728.95px;top:412.05px;width:4.85px;height:3.1px;background:rgb(233,233,233)"></div>
<div class="a" style="left:728.95px;top:415.15px;width:4.85px;height:4.9px;background:rgb(187,187,187)"></div>
<div class="a" style="left:733.80px;top:412.05px;width:4.85px;height:3.1px;background:rgb(234,234,234)"></div>
<div class="a" style="left:733.80px;top:415.15px;width:4.85px;height:4.9px;background:rgb(209,209,209)"></div>
<div class="a" style="left:738.65px;top:412.05px;width:4.85px;height:3.1px;background:rgb(220,220,220)"></div>
<div class="a" style="left:738.65px;top:415.15px;width:4.85px;height:4.9px;background:rgb(176,176,176)"></div>
<div class="a" style="left:743.50px;top:412.05px;width:4.85px;height:3.1px;background:rgb(237,236,233)"></div>
<div class="a" style="left:743.50px;top:415.15px;width:4.85px;height:4.9px;background:rgb(176,175,172)"></div>
<div class="a" style="left:748.35px;top:412.05px;width:4.85px;height:3.1px;background:rgb(217,217,217)"></div>
<div class="a" style="left:748.35px;top:415.15px;width:4.85px;height:4.9px;background:rgb(210,210,210)"></div>
<div class="a" style="left:753.20px;top:412.05px;width:4.85px;height:3.1px;background:rgb(236,235,232)"></div>
<div class="a" style="left:753.20px;top:415.15px;width:4.85px;height:4.9px;background:rgb(197,196,193)"></div>
<div class="a" style="left:758.05px;top:412.05px;width:4.85px;height:3.1px;background:rgb(222,222,222)"></div>
<div class="a" style="left:758.05px;top:415.15px;width:4.85px;height:4.9px;background:rgb(225,225,225)"></div>
<div class="a" style="left:762.90px;top:412.05px;width:4.85px;height:3.1px;background:rgb(237,236,233)"></div>
<div class="a" style="left:762.90px;top:415.15px;width:4.85px;height:4.9px;background:rgb(234,233,230)"></div>
<div class="a" style="left:767.75px;top:412.05px;width:4.85px;height:3.1px;background:rgb(224,226,229)"></div>
<div class="a" style="left:767.75px;top:415.15px;width:4.85px;height:4.9px;background:rgb(223,225,228)"></div>
<div class="t" style="left:347.20px;width:65.30px;text-align:center;top:428.57px;font-size:7.6px;color:#333;letter-spacing:0.4px">02/12/2024</div>
<div class="t" style="left:407.50px;width:68.00px;text-align:center;top:428.57px;font-size:7.6px;color:#333;transform:scaleX(0.87)">FACTURA</div>
<div class="t" style="left:477.00px;top:428.57px;font-size:7.6px;color:#333;letter-spacing:-0.05px">001001</div>
<div class="t" style="left:513.50px;width:32.30px;text-align:center;top:428.57px;font-size:7.6px;color:#333;">1711</div>
<div class="t" style="right:265.30px;top:428.57px;font-size:7.6px;color:#333;">100,000.00</div>
<div class="t" style="right:212.80px;top:428.57px;font-size:7.6px;color:#333;">0.00</div>
<div class="t" style="right:170.00px;top:428.57px;font-size:7.6px;color:#333;">0.00</div>
<div class="t" style="right:127.40px;top:428.57px;font-size:7.6px;color:#333;">5,000.00</div>
<div class="t" style="right:77.60px;top:428.57px;font-size:7.6px;color:#333;">105,000.00</div>
<div class="t" style="right:30.50px;top:428.57px;font-size:7.6px;color:#333;">0.0000</div>
<div class="t" style="left:1098.50px;top:428.57px;font-size:7.6px;color:#333;">0</div>
<div class="a" style="left:547.20px;top:426.40px;width:3.10px;height:3.1px;background:rgb(231,231,231)"></div>
<div class="a" style="left:547.20px;top:429.50px;width:3.10px;height:4.9px;background:rgb(186,186,186)"></div>
<div class="a" style="left:550.30px;top:426.40px;width:4.85px;height:3.1px;background:rgb(215,215,215)"></div>
<div class="a" style="left:550.30px;top:429.50px;width:4.85px;height:4.9px;background:rgb(182,182,182)"></div>
<div class="a" style="left:555.15px;top:426.40px;width:4.85px;height:3.1px;background:rgb(214,214,214)"></div>
<div class="a" style="left:555.15px;top:429.50px;width:4.85px;height:4.9px;background:rgb(184,184,184)"></div>
<div class="a" style="left:560.00px;top:426.40px;width:4.85px;height:3.1px;background:rgb(218,220,223)"></div>
<div class="a" style="left:560.00px;top:429.50px;width:4.85px;height:4.9px;background:rgb(174,176,179)"></div>
<div class="a" style="left:564.85px;top:426.40px;width:4.85px;height:3.1px;background:rgb(218,220,223)"></div>
<div class="a" style="left:564.85px;top:429.50px;width:4.85px;height:4.9px;background:rgb(229,231,234)"></div>
<div class="a" style="left:569.70px;top:426.40px;width:4.85px;height:3.1px;background:rgb(229,228,225)"></div>
<div class="a" style="left:569.70px;top:429.50px;width:4.85px;height:4.9px;background:rgb(214,213,210)"></div>
<div class="a" style="left:574.55px;top:426.40px;width:4.85px;height:3.1px;background:rgb(215,214,211)"></div>
<div class="a" style="left:574.55px;top:429.50px;width:4.85px;height:4.9px;background:rgb(219,218,215)"></div>
<div class="a" style="left:579.40px;top:426.40px;width:4.85px;height:3.1px;background:rgb(212,212,212)"></div>
<div class="a" style="left:579.40px;top:429.50px;width:4.85px;height:4.9px;background:rgb(223,223,223)"></div>
<div class="a" style="left:584.25px;top:426.40px;width:4.85px;height:3.1px;background:rgb(233,232,229)"></div>
<div class="a" style="left:584.25px;top:429.50px;width:4.85px;height:4.9px;background:rgb(220,219,216)"></div>
<div class="a" style="left:589.10px;top:426.40px;width:4.85px;height:3.1px;background:rgb(214,213,210)"></div>
<div class="a" style="left:589.10px;top:429.50px;width:4.85px;height:4.9px;background:rgb(191,190,187)"></div>
<div class="a" style="left:593.95px;top:426.40px;width:4.85px;height:3.1px;background:rgb(218,220,223)"></div>
<div class="a" style="left:593.95px;top:429.50px;width:4.85px;height:4.9px;background:rgb(229,231,234)"></div>
<div class="a" style="left:721.00px;top:426.40px;width:3.10px;height:3.1px;background:rgb(221,220,217)"></div>
<div class="a" style="left:721.00px;top:429.50px;width:3.10px;height:4.9px;background:rgb(177,176,173)"></div>
<div class="a" style="left:724.10px;top:426.40px;width:4.85px;height:3.1px;background:rgb(211,213,216)"></div>
<div class="a" style="left:724.10px;top:429.50px;width:4.85px;height:4.9px;background:rgb(222,224,227)"></div>
<div class="a" style="left:728.95px;top:426.40px;width:4.85px;height:3.1px;background:rgb(223,222,219)"></div>
<div class="a" style="left:728.95px;top:429.50px;width:4.85px;height:4.9px;background:rgb(203,202,199)"></div>
<div class="a" style="left:733.80px;top:426.40px;width:4.85px;height:3.1px;background:rgb(228,227,224)"></div>
<div class="a" style="left:733.80px;top:429.50px;width:4.85px;height:4.9px;background:rgb(202,201,198)"></div>
<div class="a" style="left:738.65px;top:426.40px;width:4.85px;height:3.1px;background:rgb(223,223,223)"></div>
<div class="a" style="left:738.65px;top:429.50px;width:4.85px;height:4.9px;background:rgb(169,169,169)"></div>
<div class="a" style="left:743.50px;top:426.40px;width:4.85px;height:3.1px;background:rgb(210,212,215)"></div>
<div class="a" style="left:743.50px;top:429.50px;width:4.85px;height:4.9px;background:rgb(167,169,172)"></div>
<div class="a" style="left:748.35px;top:426.40px;width:4.85px;height:3.1px;background:rgb(220,219,216)"></div>
<div class="a" style="left:748.35px;top:429.50px;width:4.85px;height:4.9px;background:rgb(202,201,198)"></div>
<div class="a" style="left:753.20px;top:426.40px;width:4.85px;height:3.1px;background:rgb(217,216,213)"></div>
<div class="a" style="left:753.20px;top:429.50px;width:4.85px;height:4.9px;background:rgb(212,211,208)"></div>
<div class="a" style="left:758.05px;top:426.40px;width:4.85px;height:3.1px;background:rgb(235,234,231)"></div>
<div class="a" style="left:758.05px;top:429.50px;width:4.85px;height:4.9px;background:rgb(201,200,197)"></div>
<div class="a" style="left:762.90px;top:426.40px;width:4.85px;height:3.1px;background:rgb(228,228,228)"></div>
<div class="a" style="left:762.90px;top:429.50px;width:4.85px;height:4.9px;background:rgb(187,187,187)"></div>
<div class="a" style="left:767.75px;top:426.40px;width:4.85px;height:3.1px;background:rgb(220,222,225)"></div>
<div class="a" style="left:767.75px;top:429.50px;width:4.85px;height:4.9px;background:rgb(178,180,183)"></div>
<div class="t" style="left:347.20px;width:65.30px;text-align:center;top:442.92px;font-size:7.6px;color:#333;letter-spacing:0.4px">02/12/2024</div>
<div class="t" style="left:407.50px;width:68.00px;text-align:center;top:442.92px;font-size:7.6px;color:#333;transform:scaleX(0.87)">FACTURA</div>
<div class="t" style="left:477.00px;top:442.92px;font-size:7.6px;color:#333;letter-spacing:-0.05px">001001</div>
<div class="t" style="left:513.50px;width:32.30px;text-align:center;top:442.92px;font-size:7.6px;color:#333;">1708</div>
<div class="t" style="right:265.30px;top:442.92px;font-size:7.6px;color:#333;">40,000.00</div>
<div class="t" style="right:212.80px;top:442.92px;font-size:7.6px;color:#333;">57,000.00</div>
<div class="t" style="right:170.00px;top:442.92px;font-size:7.6px;color:#333;">6,000.00</div>
<div class="t" style="right:127.40px;top:442.92px;font-size:7.6px;color:#333;">2,000.00</div>
<div class="t" style="right:77.60px;top:442.92px;font-size:7.6px;color:#333;">105,000.00</div>
<div class="t" style="right:30.50px;top:442.92px;font-size:7.6px;color:#333;">0.0000</div>
<div class="t" style="left:1098.50px;top:442.92px;font-size:7.6px;color:#333;">0</div>
<div class="a" style="left:547.20px;top:440.75px;width:3.10px;height:3.1px;background:rgb(235,235,235)"></div>
<div class="a" style="left:547.20px;top:443.85px;width:3.10px;height:4.9px;background:rgb(226,226,226)"></div>
<div class="a" style="left:550.30px;top:440.75px;width:4.85px;height:3.1px;background:rgb(218,217,214)"></div>
<div class="a" style="left:550.30px;top:443.85px;width:4.85px;height:4.9px;background:rgb(225,224,221)"></div>
<div class="a" style="left:555.15px;top:440.75px;width:4.85px;height:3.1px;background:rgb(215,217,220)"></div>
<div class="a" style="left:555.15px;top:443.85px;width:4.85px;height:4.9px;background:rgb(225,227,230)"></div>
<div class="a" style="left:560.00px;top:440.75px;width:4.85px;height:3.1px;background:rgb(231,233,236)"></div>
<div class="a" style="left:560.00px;top:443.85px;width:4.85px;height:4.9px;background:rgb(184,186,189)"></div>
<div class="a" style="left:564.85px;top:440.75px;width:4.85px;height:3.1px;background:rgb(221,221,221)"></div>
<div class="a" style="left:564.85px;top:443.85px;width:4.85px;height:4.9px;background:rgb(170,170,170)"></div>
<div class="a" style="left:569.70px;top:440.75px;width:4.85px;height:3.1px;background:rgb(222,221,218)"></div>
<div class="a" style="left:569.70px;top:443.85px;width:4.85px;height:4.9px;background:rgb(228,227,224)"></div>
<div class="a" style="left:574.55px;top:440.75px;width:4.85px;height:3.1px;background:rgb(229,229,229)"></div>
<div class="a" style="left:574.55px;top:443.85px;width:4.85px;height:4.9px;background:rgb(224,224,224)"></div>
<div class="a" style="left:579.40px;top:440.75px;width:4.85px;height:3.1px;background:rgb(223,223,223)"></div>
<div class="a" style="left:579.40px;top:443.85px;width:4.85px;height:4.9px;background:rgb(227,227,227)"></div>
<div class="a" style="left:584.25px;top:440.75px;width:4.85px;height:3.1px;background:rgb(227,227,227)"></div>
<div class="a" style="left:584.25px;top:443.85px;width:4.85px;height:4.9px;background:rgb(185,185,185)"></div>
<div class="a" style="left:589.10px;top:440.75px;width:4.85px;height:3.1px;background:rgb(219,219,219)"></div>
<div class="a" style="left:589.10px;top:443.85px;width:4.85px;height:4.9px;background:rgb(200,200,200)"></div>
<div class="a" style="left:593.95px;top:440.75px;width:4.85px;height:3.1px;background:rgb(222,221,218)"></div>
<div class="a" style="left:593.95px;top:443.85px;width:4.85px;height:4.9px;background:rgb(218,217,214)"></div>
<div class="a" style="left:721.00px;top:440.75px;width:3.10px;height:3.1px;background:rgb(212,212,212)"></div>
<div class="a" style="left:721.00px;top:443.85px;width:3.10px;height:4.9px;background:rgb(187,187,187)"></div>
<div class="a" style="left:724.10px;top:440.75px;width:4.85px;height:3.1px;background:rgb(214,214,214)"></div>
<div class="a" style="left:724.10px;top:443.85px;width:4.85px;height:4.9px;background:rgb(205,205,205)"></div>
<div class="a" style="left:728.95px;top:440.75px;width:4.85px;height:3.1px;background:rgb(231,233,236)"></div>
<div class="a" style="left:728.95px;top:443.85px;width:4.85px;height:4.9px;background:rgb(211,213,216)"></div>
<div class="a" style="left:733.80px;top:440.75px;width:4.85px;height:3.1px;background:rgb(226,225,222)"></div>
<div class="a" style="left:733.80px;top:443.85px;width:4.85px;height:4.9px;background:rgb(190,189,186)"></div>
<div class="a" style="left:738.65px;top:440.75px;width:4.85px;height:3.1px;background:rgb(214,216,219)"></div>
<div class="a" style="left:738.65px;top:443.85px;width:4.85px;height:4.9px;background:rgb(184,186,189)"></div>
<div class="a" style="left:743.50px;top:440.75px;width:4.85px;height:3.1px;background:rgb(214,216,219)"></div>
<div class="a" style="left:743.50px;top:443.85px;width:4.85px;height:4.9px;background:rgb(168,170,173)"></div>
<div class="a" style="left:748.35px;top:440.75px;width:4.85px;height:3.1px;background:rgb(226,228,231)"></div>
<div class="a" style="left:748.35px;top:443.85px;width:4.85px;height:4.9px;background:rgb(206,208,211)"></div>
<div class="a" style="left:753.20px;top:440.75px;width:4.85px;height:3.1px;background:rgb(226,228,231)"></div>
<div class="a" style="left:753.20px;top:443.85px;width:4.85px;height:4.9px;background:rgb(174,176,179)"></div>
<div class="a" style="left:758.05px;top:440.75px;width:4.85px;height:3.1px;background:rgb(228,230,233)"></div>
<div class="a" style="left:758.05px;top:443.85px;width:4.85px;height:4.9px;background:rgb(167,169,172)"></div>
<div class="a" style="left:762.90px;top:440.75px;width:4.85px;height:3.1px;background:rgb(232,234,237)"></div>
<div class="a" style="left:762.90px;top:443.85px;width:4.85px;height:4.9px;background:rgb(209,211,214)"></div>
<div class="a" style="left:767.75px;top:440.75px;width:4.85px;height:3.1px;background:rgb(217,219,222)"></div>
<div class="a" style="left:767.75px;top:443.85px;width:4.85px;height:4.9px;background:rgb(217,219,222)"></div>
<div class="t" style="left:347.20px;width:65.30px;text-align:center;top:457.27px;font-size:7.6px;color:#333;letter-spacing:0.4px">02/12/2024</div>
<div class="t" style="left:407.50px;width:68.00px;text-align:center;top:457.27px;font-size:7.6px;color:#333;transform:scaleX(0.87)">FACTURA</div>
<div class="t" style="left:477.00px;top:457.27px;font-size:7.6px;color:#333;letter-spacing:-0.05px">001001</div>
<div class="t" style="left:513.50px;width:32.30px;text-align:center;top:457.27px;font-size:7.6px;color:#333;">1711</div>
<div class="t" style="right:265.30px;top:457.27px;font-size:7.6px;color:#333;">100,000.00</div>
<div class="t" style="right:212.80px;top:457.27px;font-size:7.6px;color:#333;">0.00</div>
<div class="t" style="right:170.00px;top:457.27px;font-size:7.6px;color:#333;">15,000.00</div>
<div class="t" style="right:127.40px;top:457.27px;font-size:7.6px;color:#333;">0.00</div>
<div class="t" style="right:77.60px;top:457.27px;font-size:7.6px;color:#333;">115,000.00</div>
<div class="t" style="right:30.50px;top:457.27px;font-size:7.6px;color:#333;">0.0000</div>
<div class="t" style="left:1098.50px;top:457.27px;font-size:7.6px;color:#333;">0</div>
<div class="a" style="left:547.20px;top:455.10px;width:3.10px;height:3.1px;background:rgb(225,224,221)"></div>
<div class="a" style="left:547.20px;top:458.20px;width:3.10px;height:4.9px;background:rgb(176,175,172)"></div>
<div class="a" style="left:550.30px;top:455.10px;width:4.85px;height:3.1px;background:rgb(227,229,232)"></div>
<div class="a" style="left:550.30px;top:458.20px;width:4.85px;height:4.9px;background:rgb(169,171,174)"></div>
<div class="a" style="left:555.15px;top:455.10px;width:4.85px;height:3.1px;background:rgb(229,229,229)"></div>
<div class="a" style="left:555.15px;top:458.20px;width:4.85px;height:4.9px;background:rgb(223,223,223)"></div>
<div class="a" style="left:560.00px;top:455.10px;width:4.85px;height:3.1px;background:rgb(224,226,229)"></div>
<div class="a" style="left:560.00px;top:458.20px;width:4.85px;height:4.9px;background:rgb(170,172,175)"></div>
<div class="a" style="left:564.85px;top:455.10px;width:4.85px;height:3.1px;background:rgb(229,229,229)"></div>
<div class="a" style="left:564.85px;top:458.20px;width:4.85px;height:4.9px;background:rgb(173,173,173)"></div>
<div class="a" style="left:569.70px;top:455.10px;width:4.85px;height:3.1px;background:rgb(235,235,235)"></div>
<div class="a" style="left:569.70px;top:458.20px;width:4.85px;height:4.9px;background:rgb(198,198,198)"></div>
<div class="a" style="left:574.55px;top:455.10px;width:4.85px;height:3.1px;background:rgb(220,220,220)"></div>
<div class="a" style="left:574.55px;top:458.20px;width:4.85px;height:4.9px;background:rgb(183,183,183)"></div>
<div class="a" style="left:579.40px;top:455.10px;width:4.85px;height:3.1px;background:rgb(221,220,217)"></div>
<div class="a" style="left:579.40px;top:458.20px;width:4.85px;height:4.9px;background:rgb(211,210,207)"></div>
<div class="a" style="left:584.25px;top:455.10px;width:4.85px;height:3.1px;background:rgb(222,224,227)"></div>
<div class="a" style="left:584.25px;top:458.20px;width:4.85px;height:4.9px;background:rgb(170,172,175)"></div>
<div class="a" style="left:589.10px;top:455.10px;width:4.85px;height:3.1px;background:rgb(219,221,224)"></div>
<div class="a" style="left:589.10px;top:458.20px;width:4.85px;height:4.9px;background:rgb(168,170,173)"></div>
<div class="a" style="left:593.95px;top:455.10px;width:4.85px;height:3.1px;background:rgb(220,219,216)"></div>
<div class="a" style="left:593.95px;top:458.20px;width:4.85px;height:4.9px;background:rgb(174,173,170)"></div>
<div class="a" style="left:721.00px;top:455.10px;width:3.10px;height:3.1px;background:rgb(222,221,218)"></div>
<div class="a" style="left:721.00px;top:458.20px;width:3.10px;height:4.9px;background:rgb(211,210,207)"></div>
<div class="a" style="left:724.10px;top:455.10px;width:4.85px;height:3.1px;background:rgb(231,231,231)"></div>
<div class="a" style="left:724.10px;top:458.20px;width:4.85px;height:4.9px;background:rgb(230,230,230)"></div>
<div class="a" style="left:728.95px;top:455.10px;width:4.85px;height:3.1px;background:rgb(227,227,227)"></div>
<div class="a" style="left:728.95px;top:458.20px;width:4.85px;height:4.9px;background:rgb(185,185,185)"></div>
<div class="a" style="left:733.80px;top:455.10px;width:4.85px;height:3.1px;background:rgb(236,235,232)"></div>
<div class="a" style="left:733.80px;top:458.20px;width:4.85px;height:4.9px;background:rgb(183,182,179)"></div>
<div class="a" style="left:738.65px;top:455.10px;width:4.85px;height:3.1px;background:rgb(236,235,232)"></div>
<div class="a" style="left:738.65px;top:458.20px;width:4.85px;height:4.9px;background:rgb(203,202,199)"></div>
<div class="a" style="left:743.50px;top:455.10px;width:4.85px;height:3.1px;background:rgb(224,226,229)"></div>
<div class="a" style="left:743.50px;top:458.20px;width:4.85px;height:4.9px;background:rgb(173,175,178)"></div>
<div class="a" style="left:748.35px;top:455.10px;width:4.85px;height:3.1px;background:rgb(220,219,216)"></div>
<div class="a" style="left:748.35px;top:458.20px;width:4.85px;height:4.9px;background:rgb(189,188,185)"></div>
<div class="a" style="left:753.20px;top:455.10px;width:4.85px;height:3.1px;background:rgb(210,212,215)"></div>
<div class="a" style="left:753.20px;top:458.20px;width:4.85px;height:4.9px;background:rgb(184,186,189)"></div>
<div class="a" style="left:758.05px;top:455.10px;width:4.85px;height:3.1px;background:rgb(226,226,226)"></div>
<div class="a" style="left:758.05px;top:458.20px;width:4.85px;height:4.9px;background:rgb(185,185,185)"></div>
<div class="a" style="left:762.90px;top:455.10px;width:4.85px;height:3.1px;background:rgb(216,215,212)"></div>
<div class="a" style="left:762.90px;top:458.20px;width:4.85px;height:4.9px;background:rgb(233,232,229)"></div>
<div class="a" style="left:767.75px;top:455.10px;width:4.85px;height:3.1px;background:rgb(221,223,226)"></div>
<div class="a" style="left:767.75px;top:458.20px;width:4.85px;height:4.9px;background:rgb(174,176,179)"></div>
<div class="t" style="left:347.20px;width:65.30px;text-align:center;top:471.62px;font-size:7.6px;color:#333;letter-spacing:0.4px">02/12/2024</div>
<div class="t" style="left:407.50px;width:68.00px;text-align:center;top:471.62px;font-size:7.6px;color:#333;transform:scaleX(0.87)">FACTURA</div>
<div class="t" style="left:477.00px;top:471.62px;font-size:7.6px;color:#333;letter-spacing:-0.05px">001001</div>
<div class="t" style="left:513.50px;width:32.30px;text-align:center;top:471.62px;font-size:7.6px;color:#333;">1710</div>
<div class="t" style="right:265.30px;top:471.62px;font-size:7.6px;color:#333;">100,000.00</div>
<div class="t" style="right:212.80px;top:471.62px;font-size:7.6px;color:#333;">0.00</div>
<div class="t" style="right:170.00px;top:471.62px;font-size:7.6px;color:#333;">0.00</div>
<div class="t" style="right:127.40px;top:471.62px;font-size:7.6px;color:#333;">5,000.00</div>
<div class="t" style="right:77.60px;top:471.62px;font-size:7.6px;color:#333;">105,000.00</div>
<div class="t" style="right:30.50px;top:471.62px;font-size:7.6px;color:#333;">0.0000</div>
<div class="t" style="left:1098.50px;top:471.62px;font-size:7.6px;color:#333;">0</div>
<div class="a" style="left:547.20px;top:469.45px;width:3.10px;height:3.1px;background:rgb(226,228,231)"></div>
<div class="a" style="left:547.20px;top:472.55px;width:3.10px;height:4.9px;background:rgb(183,185,188)"></div>
<div class="a" style="left:550.30px;top:469.45px;width:4.85px;height:3.1px;background:rgb(225,224,221)"></div>
<div class="a" style="left:550.30px;top:472.55px;width:4.85px;height:4.9px;background:rgb(184,183,180)"></div>
<div class="a" style="left:555.15px;top:469.45px;width:4.85px;height:3.1px;background:rgb(222,224,227)"></div>
<div class="a" style="left:555.15px;top:472.55px;width:4.85px;height:4.9px;background:rgb(228,230,233)"></div>
<div class="a" style="left:560.00px;top:469.45px;width:4.85px;height:3.1px;background:rgb(226,226,226)"></div>
<div class="a" style="left:560.00px;top:472.55px;width:4.85px;height:4.9px;background:rgb(193,193,193)"></div>
<div class="a" style="left:564.85px;top:469.45px;width:4.85px;height:3.1px;background:rgb(225,225,225)"></div>
<div class="a" style="left:564.85px;top:472.55px;width:4.85px;height:4.9px;background:rgb(190,190,190)"></div>
<div class="a" style="left:569.70px;top:469.45px;width:4.85px;height:3.1px;background:rgb(224,223,220)"></div>
<div class="a" style="left:569.70px;top:472.55px;width:4.85px;height:4.9px;background:rgb(170,169,166)"></div>
<div class="a" style="left:574.55px;top:469.45px;width:4.85px;height:3.1px;background:rgb(224,224,224)"></div>
<div class="a" style="left:574.55px;top:472.55px;width:4.85px;height:4.9px;background:rgb(175,175,175)"></div>
<div class="a" style="left:579.40px;top:469.45px;width:4.85px;height:3.1px;background:rgb(236,235,232)"></div>
<div class="a" style="left:579.40px;top:472.55px;width:4.85px;height:4.9px;background:rgb(170,169,166)"></div>
<div class="a" style="left:584.25px;top:469.45px;width:4.85px;height:3.1px;background:rgb(218,220,223)"></div>
<div class="a" style="left:584.25px;top:472.55px;width:4.85px;height:4.9px;background:rgb(225,227,230)"></div>
<div class="a" style="left:589.10px;top:469.45px;width:4.85px;height:3.1px;background:rgb(216,215,212)"></div>
<div class="a" style="left:589.10px;top:472.55px;width:4.85px;height:4.9px;background:rgb(193,192,189)"></div>
<div class="a" style="left:593.95px;top:469.45px;width:4.85px;height:3.1px;background:rgb(211,213,216)"></div>
<div class="a" style="left:593.95px;top:472.55px;width:4.85px;height:4.9px;background:rgb(222,224,227)"></div>
<div class="a" style="left:721.00px;top:469.45px;width:3.10px;height:3.1px;background:rgb(218,217,214)"></div>
<div class="a" style="left:721.00px;top:472.55px;width:3.10px;height:4.9px;background:rgb(185,184,181)"></div>
<div class="a" style="left:724.10px;top:469.45px;width:4.85px;height:3.1px;background:rgb(230,229,226)"></div>
<div class="a" style="left:724.10px;top:472.55px;width:4.85px;height:4.9px;background:rgb(228,227,224)"></div>
<div class="a" style="left:728.95px;top:469.45px;width:4.85px;height:3.1px;background:rgb(210,212,215)"></div>
<div class="a" style="left:728.95px;top:472.55px;width:4.85px;height:4.9px;background:rgb(206,208,211)"></div>
<div class="a" style="left:733.80px;top:469.45px;width:4.85px;height:3.1px;background:rgb(229,229,229)"></div>
<div class="a" style="left:733.80px;top:472.55px;width:4.85px;height:4.9px;background:rgb(181,181,181)"></div>
<div class="a" style="left:738.65px;top:469.45px;width:4.85px;height:3.1px;background:rgb(235,235,235)"></div>
<div class="a" style="left:738.65px;top:472.55px;width:4.85px;height:4.9px;background:rgb(194,194,194)"></div>
<div class="a" style="left:743.50px;top:469.45px;width:4.85px;height:3.1px;background:rgb(230,232,235)"></div>
<div class="a" style="left:743.50px;top:472.55px;width:4.85px;height:4.9px;background:rgb(184,186,189)"></div>
<div class="a" style="left:748.35px;top:469.45px;width:4.85px;height:3.1px;background:rgb(218,217,214)"></div>
<div class="a" style="left:748.35px;top:472.55px;width:4.85px;height:4.9px;background:rgb(180,179,176)"></div>
<div class="a" style="left:753.20px;top:469.45px;width:4.85px;height:3.1px;background:rgb(219,221,224)"></div>
<div class="a" style="left:753.20px;top:472.55px;width:4.85px;height:4.9px;background:rgb(185,187,190)"></div>
<div class="a" style="left:758.05px;top:469.45px;width:4.85px;height:3.1px;background:rgb(232,232,232)"></div>
<div class="a" style="left:758.05px;top:472.55px;width:4.85px;height:4.9px;background:rgb(184,184,184)"></div>
<div class="a" style="left:762.90px;top:469.45px;width:4.85px;height:3.1px;background:rgb(223,222,219)"></div>
<div class="a" style="left:762.90px;top:472.55px;width:4.85px;height:4.9px;background:rgb(200,199,196)"></div>
<div class="a" style="left:767.75px;top:469.45px;width:4.85px;height:3.1px;background:rgb(215,215,215)"></div>
<div class="a" style="left:767.75px;top:472.55px;width:4.85px;height:4.9px;background:rgb(178,178,178)"></div>
<div class="t" style="left:347.20px;width:65.30px;text-align:center;top:485.97px;font-size:7.6px;color:#333;letter-spacing:0.4px">02/12/2024</div>
<div class="t" style="left:407.50px;width:68.00px;text-align:center;top:485.97px;font-size:7.6px;color:#333;transform:scaleX(0.87)">FACTURA</div>
<div class="t" style="left:477.00px;top:485.97px;font-size:7.6px;color:#333;letter-spacing:-0.05px">001001</div>
<div class="t" style="left:513.50px;width:32.30px;text-align:center;top:485.97px;font-size:7.6px;color:#333;">1708</div>
<div class="t" style="right:265.30px;top:485.97px;font-size:7.6px;color:#333;">40,000.00</div>
<div class="t" style="right:212.80px;top:485.97px;font-size:7.6px;color:#333;">57,000.00</div>
<div class="t" style="right:170.00px;top:485.97px;font-size:7.6px;color:#333;">6,000.00</div>
<div class="t" style="right:127.40px;top:485.97px;font-size:7.6px;color:#333;">2,000.00</div>
<div class="t" style="right:77.60px;top:485.97px;font-size:7.6px;color:#333;">105,000.00</div>
<div class="t" style="right:30.50px;top:485.97px;font-size:7.6px;color:#333;">0.0000</div>
<div class="t" style="left:1098.50px;top:485.97px;font-size:7.6px;color:#333;">0</div>
<div class="a" style="left:547.20px;top:483.80px;width:3.10px;height:3.1px;background:rgb(220,219,216)"></div>
<div class="a" style="left:547.20px;top:486.90px;width:3.10px;height:4.9px;background:rgb(202,201,198)"></div>
<div class="a" style="left:550.30px;top:483.80px;width:4.85px;height:3.1px;background:rgb(231,230,227)"></div>
<div class="a" style="left:550.30px;top:486.90px;width:4.85px;height:4.9px;background:rgb(184,183,180)"></div>
<div class="a" style="left:555.15px;top:483.80px;width:4.85px;height:3.1px;background:rgb(234,236,239)"></div>
<div class="a" style="left:555.15px;top:486.90px;width:4.85px;height:4.9px;background:rgb(194,196,199)"></div>
<div class="a" style="left:560.00px;top:483.80px;width:4.85px;height:3.1px;background:rgb(216,218,221)"></div>
<div class="a" style="left:560.00px;top:486.90px;width:4.85px;height:4.9px;background:rgb(223,225,228)"></div>
<div class="a" style="left:564.85px;top:483.80px;width:4.85px;height:3.1px;background:rgb(212,214,217)"></div>
<div class="a" style="left:564.85px;top:486.90px;width:4.85px;height:4.9px;background:rgb(221,223,226)"></div>
<div class="a" style="left:569.70px;top:483.80px;width:4.85px;height:3.1px;background:rgb(220,219,216)"></div>
<div class="a" style="left:569.70px;top:486.90px;width:4.85px;height:4.9px;background:rgb(171,170,167)"></div>
<div class="a" style="left:574.55px;top:483.80px;width:4.85px;height:3.1px;background:rgb(224,224,224)"></div>
<div class="a" style="left:574.55px;top:486.90px;width:4.85px;height:4.9px;background:rgb(194,194,194)"></div>
<div class="a" style="left:579.40px;top:483.80px;width:4.85px;height:3.1px;background:rgb(224,224,224)"></div>
<div class="a" style="left:579.40px;top:486.90px;width:4.85px;height:4.9px;background:rgb(185,185,185)"></div>
<div class="a" style="left:584.25px;top:483.80px;width:4.85px;height:3.1px;background:rgb(229,228,225)"></div>
<div class="a" style="left:584.25px;top:486.90px;width:4.85px;height:4.9px;background:rgb(187,186,183)"></div>
<div class="a" style="left:589.10px;top:483.80px;width:4.85px;height:3.1px;background:rgb(214,216,219)"></div>
<div class="a" style="left:589.10px;top:486.90px;width:4.85px;height:4.9px;background:rgb(209,211,214)"></div>
<div class="a" style="left:593.95px;top:483.80px;width:4.85px;height:3.1px;background:rgb(218,218,218)"></div>
<div class="a" style="left:593.95px;top:486.90px;width:4.85px;height:4.9px;background:rgb(173,173,173)"></div>
<div class="a" style="left:721.00px;top:483.80px;width:3.10px;height:3.1px;background:rgb(226,225,222)"></div>
<div class="a" style="left:721.00px;top:486.90px;width:3.10px;height:4.9px;background:rgb(195,194,191)"></div>
<div class="a" style="left:724.10px;top:483.80px;width:4.85px;height:3.1px;background:rgb(219,221,224)"></div>
<div class="a" style="left:724.10px;top:486.90px;width:4.85px;height:4.9px;background:rgb(226,228,231)"></div>
<div class="a" style="left:728.95px;top:483.80px;width:4.85px;height:3.1px;background:rgb(238,237,234)"></div>
<div class="a" style="left:728.95px;top:486.90px;width:4.85px;height:4.9px;background:rgb(200,199,196)"></div>
<div class="a" style="left:733.80px;top:483.80px;width:4.85px;height:3.1px;background:rgb(210,212,215)"></div>
<div class="a" style="left:733.80px;top:486.90px;width:4.85px;height:4.9px;background:rgb(170,172,175)"></div>
<div class="a" style="left:738.65px;top:483.80px;width:4.85px;height:3.1px;background:rgb(226,226,226)"></div>
<div class="a" style="left:738.65px;top:486.90px;width:4.85px;height:4.9px;background:rgb(218,218,218)"></div>
<div class="a" style="left:743.50px;top:483.80px;width:4.85px;height:3.1px;background:rgb(214,216,219)"></div>
<div class="a" style="left:743.50px;top:486.90px;width:4.85px;height:4.9px;background:rgb(175,177,180)"></div>
<div class="a" style="left:748.35px;top:483.80px;width:4.85px;height:3.1px;background:rgb(217,216,213)"></div>
<div class="a" style="left:748.35px;top:486.90px;width:4.85px;height:4.9px;background:rgb(216,215,212)"></div>
<div class="a" style="left:753.20px;top:483.80px;width:4.85px;height:3.1px;background:rgb(214,214,214)"></div>
<div class="a" style="left:753.20px;top:486.90px;width:4.85px;height:4.9px;background:rgb(203,203,203)"></div>
<div class="a" style="left:758.05px;top:483.80px;width:4.85px;height:3.1px;background:rgb(216,216,216)"></div>
<div class="a" style="left:758.05px;top:486.90px;width:4.85px;height:4.9px;background:rgb(182,182,182)"></div>
<div class="a" style="left:762.90px;top:483.80px;width:4.85px;height:3.1px;background:rgb(232,232,232)"></div>
<div class="a" style="left:762.90px;top:486.90px;width:4.85px;height:4.9px;background:rgb(213,213,213)"></div>
<div class="a" style="left:767.75px;top:483.80px;width:4.85px;height:3.1px;background:rgb(234,233,230)"></div>
<div class="a" style="left:767.75px;top:486.90px;width:4.85px;height:4.9px;background:rgb(186,185,182)"></div>
<div class="t" style="left:347.20px;width:65.30px;text-align:center;top:500.32px;font-size:7.6px;color:#333;letter-spacing:0.4px">02/12/2024</div>
<div class="t" style="left:407.50px;width:68.00px;text-align:center;top:500.32px;font-size:7.6px;color:#333;transform:scaleX(0.93)">N/CREDITO</div>
<div class="t" style="left:477.00px;top:500.32px;font-size:7.6px;color:#333;letter-spacing:-0.05px">001001</div>
<div class="t" style="left:513.50px;width:32.30px;text-align:center;top:500.32px;font-size:7.6px;color:#333;">2515</div>
<div class="t" style="right:265.30px;top:500.32px;font-size:7.6px;color:#333;">-100,000.00</div>
<div class="t" style="right:212.80px;top:500.32px;font-size:7.6px;color:#333;">0.00</div>
<div class="t" style="right:170.00px;top:500.32px;font-size:7.6px;color:#333;">0.00</div>
<div class="t" style="right:127.40px;top:500.32px;font-size:7.6px;color:#333;">-5,000.00</div>
<div class="t" style="right:77.60px;top:500.32px;font-size:7.6px;color:#333;">-105,000.00</div>
<div class="t" style="right:30.50px;top:500.32px;font-size:7.6px;color:#333;">0.0000</div>
<div class="t" style="left:1098.50px;top:500.32px;font-size:7.6px;color:#333;">0</div>
<div class="a" style="left:547.20px;top:498.15px;width:3.10px;height:3.1px;background:rgb(232,234,237)"></div>
<div class="a" style="left:547.20px;top:501.25px;width:3.10px;height:4.9px;background:rgb(222,224,227)"></div>
<div class="a" style="left:550.30px;top:498.15px;width:4.85px;height:3.1px;background:rgb(230,230,230)"></div>
<div class="a" style="left:550.30px;top:501.25px;width:4.85px;height:4.9px;background:rgb(180,180,180)"></div>
<div class="a" style="left:555.15px;top:498.15px;width:4.85px;height:3.1px;background:rgb(233,232,229)"></div>
<div class="a" style="left:555.15px;top:501.25px;width:4.85px;height:4.9px;background:rgb(226,225,222)"></div>
<div class="a" style="left:560.00px;top:498.15px;width:4.85px;height:3.1px;background:rgb(220,220,220)"></div>
<div class="a" style="left:560.00px;top:501.25px;width:4.85px;height:4.9px;background:rgb(188,188,188)"></div>
<div class="a" style="left:564.85px;top:498.15px;width:4.85px;height:3.1px;background:rgb(227,227,227)"></div>
<div class="a" style="left:564.85px;top:501.25px;width:4.85px;height:4.9px;background:rgb(222,222,222)"></div>
<div class="a" style="left:569.70px;top:498.15px;width:4.85px;height:3.1px;background:rgb(225,225,225)"></div>
<div class="a" style="left:569.70px;top:501.25px;width:4.85px;height:4.9px;background:rgb(213,213,213)"></div>
<div class="a" style="left:574.55px;top:498.15px;width:4.85px;height:3.1px;background:rgb(210,212,215)"></div>
<div class="a" style="left:574.55px;top:501.25px;width:4.85px;height:4.9px;background:rgb(178,180,183)"></div>
<div class="a" style="left:579.40px;top:498.15px;width:4.85px;height:3.1px;background:rgb(230,232,235)"></div>
<div class="a" style="left:579.40px;top:501.25px;width:4.85px;height:4.9px;background:rgb(220,222,225)"></div>
<div class="a" style="left:584.25px;top:498.15px;width:4.85px;height:3.1px;background:rgb(223,225,228)"></div>
<div class="a" style="left:584.25px;top:501.25px;width:4.85px;height:4.9px;background:rgb(214,216,219)"></div>
<div class="a" style="left:589.10px;top:498.15px;width:4.85px;height:3.1px;background:rgb(220,222,225)"></div>
<div class="a" style="left:589.10px;top:501.25px;width:4.85px;height:4.9px;background:rgb(211,213,216)"></div>
<div class="a" style="left:593.95px;top:498.15px;width:4.85px;height:3.1px;background:rgb(222,224,227)"></div>
<div class="a" style="left:593.95px;top:501.25px;width:4.85px;height:4.9px;background:rgb(222,224,227)"></div>
<div class="a" style="left:721.00px;top:498.15px;width:3.10px;height:3.1px;background:rgb(230,229,226)"></div>
<div class="a" style="left:721.00px;top:501.25px;width:3.10px;height:4.9px;background:rgb(223,222,219)"></div>
<div class="a" style="left:724.10px;top:498.15px;width:4.85px;height:3.1px;background:rgb(238,237,234)"></div>
<div class="a" style="left:724.10px;top:501.25px;width:4.85px;height:4.9px;background:rgb(224,223,220)"></div>
<div class="a" style="left:728.95px;top:498.15px;width:4.85px;height:3.1px;background:rgb(234,236,239)"></div>
<div class="a" style="left:728.95px;top:501.25px;width:4.85px;height:4.9px;background:rgb(228,230,233)"></div>
<div class="a" style="left:733.80px;top:498.15px;width:4.85px;height:3.1px;background:rgb(215,217,220)"></div>
<div class="a" style="left:733.80px;top:501.25px;width:4.85px;height:4.9px;background:rgb(180,182,185)"></div>
<div class="a" style="left:738.65px;top:498.15px;width:4.85px;height:3.1px;background:rgb(213,213,213)"></div>
<div class="a" style="left:738.65px;top:501.25px;width:4.85px;height:4.9px;background:rgb(227,227,227)"></div>
<div class="a" style="left:743.50px;top:498.15px;width:4.85px;height:3.1px;background:rgb(218,218,218)"></div>
<div class="a" style="left:743.50px;top:501.25px;width:4.85px;height:4.9px;background:rgb(169,169,169)"></div>
<div class="a" style="left:748.35px;top:498.15px;width:4.85px;height:3.1px;background:rgb(225,225,225)"></div>
<div class="a" style="left:748.35px;top:501.25px;width:4.85px;height:4.9px;background:rgb(171,171,171)"></div>
<div class="a" style="left:753.20px;top:498.15px;width:4.85px;height:3.1px;background:rgb(226,225,222)"></div>
<div class="a" style="left:753.20px;top:501.25px;width:4.85px;height:4.9px;background:rgb(198,197,194)"></div>
<div class="a" style="left:758.05px;top:498.15px;width:4.85px;height:3.1px;background:rgb(235,235,235)"></div>
<div class="a" style="left:758.05px;top:501.25px;width:4.85px;height:4.9px;background:rgb(175,175,175)"></div>
<div class="a" style="left:762.90px;top:498.15px;width:4.85px;height:3.1px;background:rgb(220,222,225)"></div>
<div class="a" style="left:762.90px;top:501.25px;width:4.85px;height:4.9px;background:rgb(229,231,234)"></div>
<div class="a" style="left:767.75px;top:498.15px;width:4.85px;height:3.1px;background:rgb(224,226,229)"></div>
<div class="a" style="left:767.75px;top:501.25px;width:4.85px;height:4.9px;background:rgb(168,170,173)"></div>
<div class="t" style="left:547.2px;top:528.87px;font-size:7.4px;font-weight:bold;color:#333">TOTAL FACTURACION 01/12/2024 - 02/12/2024</div>
<div class="t" style="right:265.30px;top:528.87px;font-size:7.6px;color:#333;font-weight:bold">580,000.00</div>
<div class="t" style="right:212.80px;top:528.87px;font-size:7.6px;color:#333;font-weight:bold">214,000.00</div>
<div class="t" style="right:170.00px;top:528.87px;font-size:7.6px;color:#333;font-weight:bold">42,000.00</div>
<div class="t" style="right:127.40px;top:528.87px;font-size:7.6px;color:#333;font-weight:bold">19,000.00</div>
<div class="t" style="right:77.60px;top:528.87px;font-size:7.6px;color:#333;font-weight:bold">855,000.00</div>
<div class="a" style="left:346.8px;top:366.9px;width:66px;height:15.3px;border:2px solid #111"></div>
<div class="a" style="left:915.5px;top:520.3px;width:87.3px;height:27.3px;border:2.3px solid #12831c"></div>
</body></html>
